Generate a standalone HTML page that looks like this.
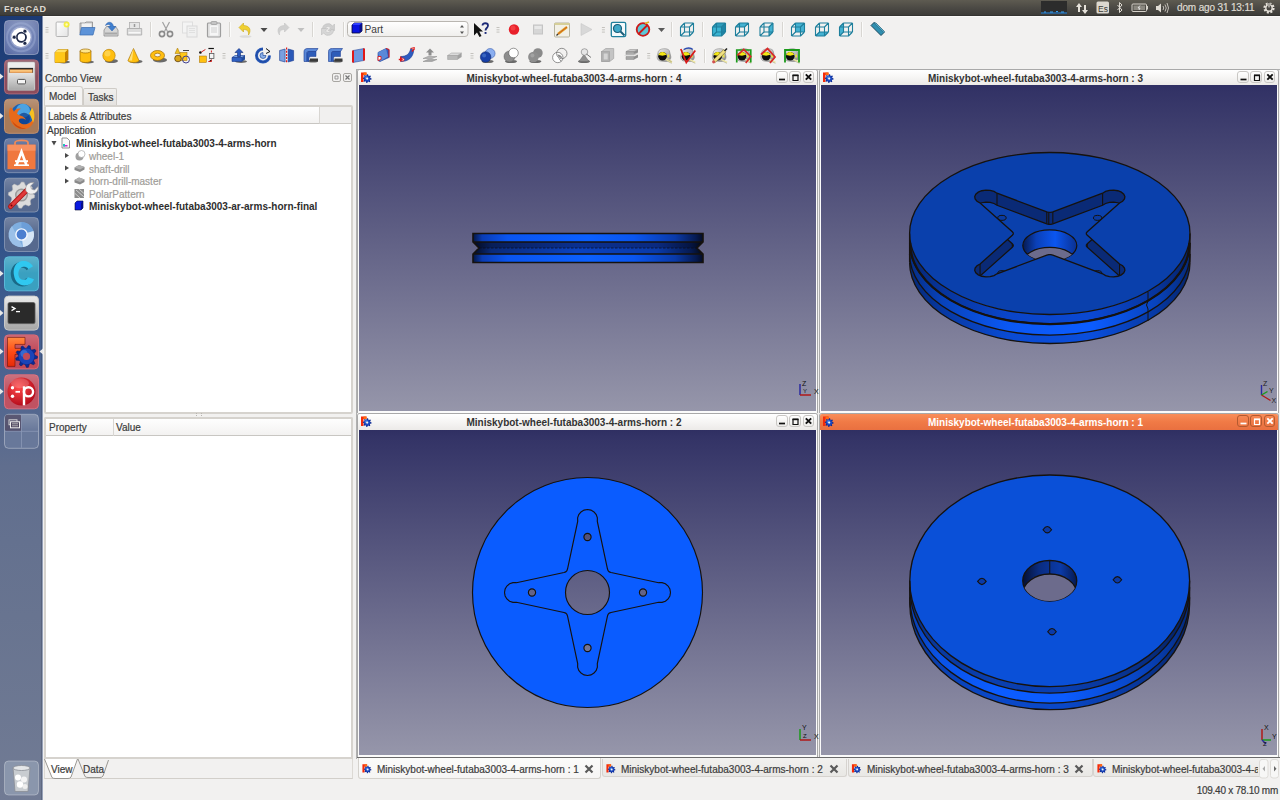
<!DOCTYPE html><html><head><meta charset="utf-8"><style>
*{margin:0;padding:0;box-sizing:border-box}
html,body{width:1280px;height:800px;overflow:hidden;background:#f2f1f0;font-family:"Liberation Sans",sans-serif;font-size:10px;color:#3c3c3c}
div,span{position:absolute}
svg{position:absolute;left:0;top:0}
.t{white-space:nowrap;line-height:1;-webkit-text-stroke:0.2px currentColor}
.t[style*="bold"]{-webkit-text-stroke:0}
</style></head><body>
<div style="left:0;top:0;width:1280px;height:16px;background:linear-gradient(#5e5b51,#4b4944 50%,#3e3d39 93%,#2e2d2a)"></div>
<div class="t" style="left:4px;top:5px;font-weight:bold;font-size:9px;letter-spacing:0.6px;color:#dfdbd2">FreeCAD</div>
<div class="t" style="left:1177px;top:3px;font-size:10px;color:#dfdbd2;letter-spacing:-0.15px">dom ago 31 13:11</div>
<div style="left:0;top:16px;width:43px;height:784px;background:linear-gradient(#1c3a74 0px,#24467e 100px,#33548a 230px,#4a6290 350px,#606e8e 450px,#687490 600px,#717b94 784px)"></div>
<div style="left:41px;top:16px;width:1px;height:784px;background:rgba(20,30,50,0.2)"></div>
<div style="left:42px;top:16px;width:1px;height:784px;background:rgba(170,180,200,0.7)"></div>
<div style="left:43px;top:16px;width:1237px;height:1px;background:#fbfaf9"></div>
<div class="t" style="left:45px;top:74px;font-size:10px;color:#3c3c3c">Combo View</div>
<div style="left:332px;top:73px;width:9px;height:9px;border:1px solid #a8a6a2;border-radius:2px;background:#f2f1f0"></div>
<div style="left:343px;top:73px;width:9px;height:9px;border:1px solid #a8a6a2;border-radius:2px;background:#f2f1f0"></div>
<div style="left:83px;top:88px;width:34px;height:18px;border:1px solid #cfccc7;border-bottom:none;border-radius:2px 2px 0 0;background:linear-gradient(#f1f0ee,#e4e2df)"></div>
<div style="left:44px;top:86px;width:39px;height:20px;border:1px solid #d3d0cb;border-bottom:none;border-radius:3px 3px 0 0;background:#f4f3f2"></div>
<div class="t" style="left:49px;top:92px;color:#3c3c3c">Model</div>
<div class="t" style="left:88px;top:93px;color:#3c3c3c">Tasks</div>
<div style="left:44px;top:105px;width:309px;height:309px;border:2px solid #d6d3ce;border-radius:2px;background:#fff"></div>
<div style="left:46px;top:107px;width:305px;height:17px;background:#f1f0ef;border-bottom:1px solid #cfcdc9"></div>
<div style="left:46px;top:107px;width:274px;height:17px;background:linear-gradient(#fefefe,#f3f2f1);border-right:1px solid #d8d6d2;border-bottom:1px solid #c8c6c2"></div>
<div class="t" style="left:48px;top:112px;color:#3c3c3c">Labels &amp; Attributes</div>
<div class="t" style="left:47px;top:126px;font-weight:normal;color:#3c3c3c">Application</div>
<div class="t" style="left:76px;top:139px;font-weight:bold;color:#2e2e2e">Miniskybot-wheel-futaba3003-4-arms-horn</div>
<div class="t" style="left:89px;top:151.5px;font-weight:normal;color:#a09d99">wheel-1</div>
<div class="t" style="left:89px;top:164.5px;font-weight:normal;color:#a09d99">shaft-drill</div>
<div class="t" style="left:89px;top:177px;font-weight:normal;color:#a09d99">horn-drill-master</div>
<div class="t" style="left:89px;top:189.5px;font-weight:normal;color:#a09d99">PolarPattern</div>
<div class="t" style="left:89px;top:202px;font-weight:bold;color:#2e2e2e">Miniskybot-wheel-futaba3003-ar-arms-horn-final</div>
<div style="left:196px;top:413px;width:6px;height:3px;border-left:1px dotted #b8b5b0;border-right:1px dotted #b8b5b0"></div>
<div style="left:44px;top:417px;width:309px;height:345px;border:2px solid #d6d3ce;border-bottom:none;border-radius:2px 2px 0 0;background:#fff"></div>
<div style="left:46px;top:419px;width:305px;height:17px;background:linear-gradient(#fefefe,#f3f2f1);border-bottom:1px solid #c8c6c2"></div>
<div style="left:113px;top:419px;width:1px;height:17px;background:#d8d6d2"></div>
<div class="t" style="left:49px;top:423px;color:#3c3c3c">Property</div>
<div class="t" style="left:116px;top:423px;color:#3c3c3c">Value</div>
<div style="left:44px;top:757px;width:309px;height:2px;background:#d6d3ce"></div>
<div style="left:44px;top:759px;width:309px;height:20px;border-left:1px solid #dcd9d4;border-right:1px solid #dcd9d4;border-bottom:1px solid #d2cfca;background:#f2f1f0"></div>
<svg width="120" height="24" style="left:40px;top:757px"><path d="M4.5,2 L12,20.5 Q13,21.5 15,21.5 H28 Q30,21.5 31,20 L37.5,2" fill="#fff" stroke="#8e8c88" stroke-width="0.9"/><path d="M38,2 L45,19.5 Q46,20.5 48,20.5 H60 Q62,20.5 63,19 L68.5,3" fill="#f1f0ef" stroke="#8e8c88" stroke-width="0.9"/></svg>
<div class="t" style="left:51px;top:765px;color:#3c3c3c">View</div>
<div class="t" style="left:83px;top:765px;color:#3c3c3c">Data</div>
<div style="left:356px;top:69px;width:924px;height:690px;background:#f2f1f0;border-left:1px solid #b0b0b0;border-top:1px solid #b0b0b0"></div>
<div style="left:357px;top:69px;width:461px;height:344px;background:#fbfbfb;border:1px solid #a9a9a9;border-bottom:none;border-radius:3px 3px 0 0"></div>
<div style="left:358px;top:70px;width:459px;height:15px;background:linear-gradient(#ffffff,#f7f6f5 45%,#eceae8);border-radius:2px 2px 0 0"></div>
<div style="left:359px;top:85px;width:457px;height:326px;background:linear-gradient(#2f2f62,#333366 2%,#9696aa)"></div>
<div class="t" style="left:373px;width:402px;top:74px;text-align:center;font-weight:bold;color:#333333">Miniskybot-wheel-futaba3003-4-arms-horn : 4</div>
<div style="left:776.0px;top:71px;width:11.5px;height:12px;border:1px solid #c9c7c4;border-radius:3px;background:linear-gradient(#ffffff,#eeedeb)"></div>
<div style="left:789.3px;top:71px;width:11.5px;height:12px;border:1px solid #c9c7c4;border-radius:3px;background:linear-gradient(#ffffff,#eeedeb)"></div>
<div style="left:802.6px;top:71px;width:11.5px;height:12px;border:1px solid #c9c7c4;border-radius:3px;background:linear-gradient(#ffffff,#eeedeb)"></div>
<div style="left:819px;top:69px;width:460px;height:344px;background:#fbfbfb;border:1px solid #a9a9a9;border-bottom:none;border-radius:3px 3px 0 0"></div>
<div style="left:820px;top:70px;width:458px;height:15px;background:linear-gradient(#ffffff,#f7f6f5 45%,#eceae8);border-radius:2px 2px 0 0"></div>
<div style="left:821px;top:85px;width:456px;height:326px;background:linear-gradient(#2f2f62,#333366 2%,#9696aa)"></div>
<div class="t" style="left:835px;width:401px;top:74px;text-align:center;font-weight:bold;color:#333333">Miniskybot-wheel-futaba3003-4-arms-horn : 3</div>
<div style="left:1237.0px;top:71px;width:11.5px;height:12px;border:1px solid #c9c7c4;border-radius:3px;background:linear-gradient(#ffffff,#eeedeb)"></div>
<div style="left:1250.3px;top:71px;width:11.5px;height:12px;border:1px solid #c9c7c4;border-radius:3px;background:linear-gradient(#ffffff,#eeedeb)"></div>
<div style="left:1263.6px;top:71px;width:11.5px;height:12px;border:1px solid #c9c7c4;border-radius:3px;background:linear-gradient(#ffffff,#eeedeb)"></div>
<div style="left:357px;top:413px;width:461px;height:344px;background:#fbfbfb;border:1px solid #a9a9a9;border-bottom:none;border-radius:3px 3px 0 0"></div>
<div style="left:358px;top:414px;width:459px;height:16px;background:linear-gradient(#ffffff,#f7f6f5 45%,#eceae8);border-radius:2px 2px 0 0"></div>
<div style="left:359px;top:430px;width:457px;height:325px;background:linear-gradient(#2f2f62,#333366 2%,#9696aa)"></div>
<div class="t" style="left:373px;width:402px;top:418px;text-align:center;font-weight:bold;color:#333333">Miniskybot-wheel-futaba3003-4-arms-horn : 2</div>
<div style="left:776.0px;top:415px;width:11.5px;height:12px;border:1px solid #c9c7c4;border-radius:3px;background:linear-gradient(#ffffff,#eeedeb)"></div>
<div style="left:789.3px;top:415px;width:11.5px;height:12px;border:1px solid #c9c7c4;border-radius:3px;background:linear-gradient(#ffffff,#eeedeb)"></div>
<div style="left:802.6px;top:415px;width:11.5px;height:12px;border:1px solid #c9c7c4;border-radius:3px;background:linear-gradient(#ffffff,#eeedeb)"></div>
<div style="left:819px;top:413px;width:460px;height:344px;background:#fbfbfb;border:1px solid #a9a9a9;border-bottom:none;border-radius:3px 3px 0 0"></div>
<div style="left:820px;top:414px;width:458px;height:16px;background:linear-gradient(#f98e5a,#f07a46 50%,#e97040);border-radius:2px 2px 0 0"></div>
<div style="left:821px;top:430px;width:456px;height:325px;background:linear-gradient(#2f2f62,#333366 2%,#9696aa)"></div>
<div class="t" style="left:835px;width:401px;top:418px;text-align:center;font-weight:bold;color:#ffffff">Miniskybot-wheel-futaba3003-4-arms-horn : 1</div>
<div style="left:1237.0px;top:415px;width:11.5px;height:12px;border:1px solid #b45a30;border-radius:3px;background:transparent"></div>
<div style="left:1250.3px;top:415px;width:11.5px;height:12px;border:1px solid #b45a30;border-radius:3px;background:transparent"></div>
<div style="left:1263.6px;top:415px;width:11.5px;height:12px;border:1px solid #b45a30;border-radius:3px;background:transparent"></div>
<div style="left:357px;top:757px;width:923px;height:1px;background:#6b6b6b"></div>
<div style="left:357px;top:758px;width:923px;height:21px;background:#f2f1f0"></div>
<div style="left:358px;top:758px;width:243px;height:21px;background:linear-gradient(#fbfbfa,#f6f5f4);border:1px solid #d4d1cc;border-top:none;border-radius:0 0 3px 3px"></div>
<div class="t" style="left:377px;top:765px;color:#3c3c3c;overflow:hidden;width:210px">Miniskybot-wheel-futaba3003-4-arms-horn : 1</div>
<div style="left:602px;top:759px;width:245px;height:18px;background:linear-gradient(#f1f0ee,#e9e8e5);border:1px solid #d6d3cf;border-top:none;border-radius:0 0 3px 3px"></div>
<div class="t" style="left:621px;top:765px;color:#3c3c3c;overflow:hidden;width:210px">Miniskybot-wheel-futaba3003-4-arms-horn : 2</div>
<div style="left:848px;top:759px;width:245px;height:18px;background:linear-gradient(#f1f0ee,#e9e8e5);border:1px solid #d6d3cf;border-top:none;border-radius:0 0 3px 3px"></div>
<div class="t" style="left:867px;top:765px;color:#3c3c3c;overflow:hidden;width:210px">Miniskybot-wheel-futaba3003-4-arms-horn : 3</div>
<div style="left:1093px;top:759px;width:169px;height:18px;background:linear-gradient(#f1f0ee,#e9e8e5);border:1px solid #d6d3cf;border-top:none;border-radius:0 0 3px 3px"></div>
<div class="t" style="left:1112px;top:765px;color:#3c3c3c;overflow:hidden;width:146px">Miniskybot-wheel-futaba3003-4-a</div>
<div class="t" style="left:1102px;width:176px;top:786px;text-align:right;color:#3c3c3c;letter-spacing:-0.25px">109.40 x 78.10 mm</div>
<svg width="1280" height="800" viewBox="0 0 1280 800" font-family="Liberation Sans, sans-serif">
<defs>
<linearGradient id="g4a" x1="0" x2="1" y1="0" y2="0">
<stop offset="0" stop-color="#061640"/><stop offset="0.04" stop-color="#0a3cb4"/><stop offset="0.15" stop-color="#0a55f0"/><stop offset="0.5" stop-color="#0b60ff"/><stop offset="0.7" stop-color="#0a56f0"/><stop offset="0.88" stop-color="#0a3aa8"/><stop offset="0.97" stop-color="#061a50"/><stop offset="1" stop-color="#050c24"/></linearGradient>
<linearGradient id="g4b" x1="0" x2="1" y1="0" y2="0">
<stop offset="0" stop-color="#030a20"/><stop offset="0.08" stop-color="#081e58"/><stop offset="0.45" stop-color="#0a3090"/><stop offset="0.8" stop-color="#0a2a80"/><stop offset="0.95" stop-color="#051440"/><stop offset="1" stop-color="#030812"/></linearGradient>
<linearGradient id="g4c" x1="0" x2="1" y1="0" y2="0">
<stop offset="0" stop-color="#030a20"/><stop offset="0.08" stop-color="#0a2a78"/><stop offset="0.45" stop-color="#0a42c0"/><stop offset="0.8" stop-color="#0a3aa8"/><stop offset="0.95" stop-color="#061a50"/><stop offset="1" stop-color="#030812"/></linearGradient>
</defs>
<rect x="473" y="233" width="230" height="9" fill="url(#g4a)"/>
<polygon points="473,242 703,242 697,248 479,248" fill="url(#g4b)"/>
<polygon points="479,248 697,248 703,254 473,254" fill="url(#g4c)"/>
<rect x="473" y="254" width="230" height="9" fill="url(#g4a)"/>
<path d="M473,233.5 H703 V242 L697,248 L703,254 V262.5 H473 V254 L479,248 L473,242 Z M473,242 H703 M473,254 H703" fill="none" stroke="#16120e" stroke-width="1.6"/>
<path d="M479,248 H697" stroke="#0c0c18" stroke-width="1.1" stroke-dasharray="2.5,1.5" opacity="0.7"/>
<defs><linearGradient id="sideShade" x1="0" x2="1" y1="0" y2="0"><stop offset="0" stop-color="#000820" stop-opacity="0.55"/><stop offset="0.12" stop-color="#000820" stop-opacity="0.3"/><stop offset="0.35" stop-color="#000820" stop-opacity="0.05"/><stop offset="0.65" stop-color="#000820" stop-opacity="0"/><stop offset="0.88" stop-color="#000820" stop-opacity="0.3"/><stop offset="1" stop-color="#000820" stop-opacity="0.6"/></linearGradient></defs>
<path d="M1190,233.5 L1189.7,238.8 L1188.8,244.07 L1187.31,249.3 L1185.22,254.46 L1182.56,259.54 L1179.33,264.5 L1175.54,269.33 L1171.22,274 L1166.37,278.5 L1161.03,282.81 L1155.21,286.91 L1148.94,290.78 L1142.24,294.4 L1135.15,297.76 L1127.69,300.85 L1119.9,303.65 L1111.81,306.15 L1103.45,308.33 L1094.87,310.2 L1086.09,311.74 L1077.15,312.94 L1068.1,313.81 L1058.97,314.33 L1049.8,314.5 L1040.63,314.33 L1031.5,313.81 L1022.45,312.94 L1013.51,311.74 L1004.73,310.2 L996.15,308.33 L987.79,306.15 L979.7,303.65 L971.91,300.85 L964.45,297.76 L957.36,294.4 L950.66,290.78 L944.39,286.91 L938.57,282.81 L933.23,278.5 L928.38,274 L924.06,269.33 L920.27,264.5 L917.04,259.54 L914.38,254.46 L912.29,249.3 L910.8,244.07 L909.9,238.8 L909.6,233.5 L909.6,242.8 L909.9,248.1 L910.8,253.37 L912.29,258.6 L914.38,263.76 L917.04,268.84 L920.27,273.8 L924.06,278.63 L928.38,283.3 L933.23,287.8 L938.57,292.11 L944.39,296.21 L950.66,300.08 L957.36,303.7 L964.45,307.06 L971.91,310.15 L979.7,312.95 L987.79,315.45 L996.15,317.63 L1004.73,319.5 L1013.51,321.04 L1022.45,322.24 L1031.5,323.11 L1040.63,323.63 L1049.8,323.8 L1058.97,323.63 L1068.1,323.11 L1077.15,322.24 L1086.09,321.04 L1094.87,319.5 L1103.45,317.63 L1111.81,315.45 L1119.9,312.95 L1127.69,310.15 L1135.15,307.06 L1142.24,303.7 L1148.94,300.08 L1155.21,296.21 L1161.03,292.11 L1166.37,287.8 L1171.22,283.3 L1175.54,278.63 L1179.33,273.8 L1182.56,268.84 L1185.22,263.76 L1187.31,258.6 L1188.8,253.37 L1189.7,248.1 L1190,242.8Z" fill="#0a48d2"/>
<path d="M1190,242.8 L1189.7,248.1 L1188.8,253.37 L1187.31,258.6 L1185.22,263.76 L1182.56,268.84 L1179.33,273.8 L1175.54,278.63 L1171.22,283.3 L1166.37,287.8 L1161.03,292.11 L1155.21,296.21 L1148.94,300.08 L1142.24,303.7 L1135.15,307.06 L1127.69,310.15 L1119.9,312.95 L1111.81,315.45 L1103.45,317.63 L1094.87,319.5 L1086.09,321.04 L1077.15,322.24 L1068.1,323.11 L1058.97,323.63 L1049.8,323.8 L1040.63,323.63 L1031.5,323.11 L1022.45,322.24 L1013.51,321.04 L1004.73,319.5 L996.15,317.63 L987.79,315.45 L979.7,312.95 L971.91,310.15 L964.45,307.06 L957.36,303.7 L950.66,300.08 L944.39,296.21 L938.57,292.11 L933.23,287.8 L928.38,283.3 L924.06,278.63 L920.27,273.8 L917.04,268.84 L914.38,263.76 L912.29,258.6 L910.8,253.37 L909.9,248.1 L909.6,242.8 L909.6,254.1 L909.9,259.4 L910.8,264.67 L912.29,269.9 L914.38,275.06 L917.04,280.14 L920.27,285.1 L924.06,289.93 L928.38,294.6 L933.23,299.1 L938.57,303.41 L944.39,307.51 L950.66,311.38 L957.36,315 L964.45,318.36 L971.91,321.45 L979.7,324.25 L987.79,326.75 L996.15,328.93 L1004.73,330.8 L1013.51,332.34 L1022.45,333.54 L1031.5,334.41 L1040.63,334.93 L1049.8,335.1 L1058.97,334.93 L1068.1,334.41 L1077.15,333.54 L1086.09,332.34 L1094.87,330.8 L1103.45,328.93 L1111.81,326.75 L1119.9,324.25 L1127.69,321.45 L1135.15,318.36 L1142.24,315 L1148.94,311.38 L1155.21,307.51 L1161.03,303.41 L1166.37,299.1 L1171.22,294.6 L1175.54,289.93 L1179.33,285.1 L1182.56,280.14 L1185.22,275.06 L1187.31,269.9 L1188.8,264.67 L1189.7,259.4 L1190,254.1Z" fill="#0b5cff"/>
<path d="M1190,254.1 L1189.7,259.4 L1188.8,264.67 L1187.31,269.9 L1185.22,275.06 L1182.56,280.14 L1179.33,285.1 L1175.54,289.93 L1171.22,294.6 L1166.37,299.1 L1161.03,303.41 L1155.21,307.51 L1148.94,311.38 L1142.24,315 L1135.15,318.36 L1127.69,321.45 L1119.9,324.25 L1111.81,326.75 L1103.45,328.93 L1094.87,330.8 L1086.09,332.34 L1077.15,333.54 L1068.1,334.41 L1058.97,334.93 L1049.8,335.1 L1040.63,334.93 L1031.5,334.41 L1022.45,333.54 L1013.51,332.34 L1004.73,330.8 L996.15,328.93 L987.79,326.75 L979.7,324.25 L971.91,321.45 L964.45,318.36 L957.36,315 L950.66,311.38 L944.39,307.51 L938.57,303.41 L933.23,299.1 L928.38,294.6 L924.06,289.93 L920.27,285.1 L917.04,280.14 L914.38,275.06 L912.29,269.9 L910.8,264.67 L909.9,259.4 L909.6,254.1 L909.6,262.5 L909.9,267.8 L910.8,273.07 L912.29,278.3 L914.38,283.46 L917.04,288.54 L920.27,293.5 L924.06,298.33 L928.38,303 L933.23,307.5 L938.57,311.81 L944.39,315.91 L950.66,319.78 L957.36,323.4 L964.45,326.76 L971.91,329.85 L979.7,332.65 L987.79,335.15 L996.15,337.33 L1004.73,339.2 L1013.51,340.74 L1022.45,341.94 L1031.5,342.81 L1040.63,343.33 L1049.8,343.5 L1058.97,343.33 L1068.1,342.81 L1077.15,341.94 L1086.09,340.74 L1094.87,339.2 L1103.45,337.33 L1111.81,335.15 L1119.9,332.65 L1127.69,329.85 L1135.15,326.76 L1142.24,323.4 L1148.94,319.78 L1155.21,315.91 L1161.03,311.81 L1166.37,307.5 L1171.22,303 L1175.54,298.33 L1179.33,293.5 L1182.56,288.54 L1185.22,283.46 L1187.31,278.3 L1188.8,273.07 L1189.7,267.8 L1190,262.5Z" fill="#0a4edc"/>
<path d="M1190,233.5 L1189.7,238.8 L1188.8,244.07 L1187.31,249.3 L1185.22,254.46 L1182.56,259.54 L1179.33,264.5 L1175.54,269.33 L1171.22,274 L1166.37,278.5 L1161.03,282.81 L1155.21,286.91 L1148.94,290.78 L1142.24,294.4 L1135.15,297.76 L1127.69,300.85 L1119.9,303.65 L1111.81,306.15 L1103.45,308.33 L1094.87,310.2 L1086.09,311.74 L1077.15,312.94 L1068.1,313.81 L1058.97,314.33 L1049.8,314.5 L1040.63,314.33 L1031.5,313.81 L1022.45,312.94 L1013.51,311.74 L1004.73,310.2 L996.15,308.33 L987.79,306.15 L979.7,303.65 L971.91,300.85 L964.45,297.76 L957.36,294.4 L950.66,290.78 L944.39,286.91 L938.57,282.81 L933.23,278.5 L928.38,274 L924.06,269.33 L920.27,264.5 L917.04,259.54 L914.38,254.46 L912.29,249.3 L910.8,244.07 L909.9,238.8 L909.6,233.5 L909.6,262.5 L909.9,267.8 L910.8,273.07 L912.29,278.3 L914.38,283.46 L917.04,288.54 L920.27,293.5 L924.06,298.33 L928.38,303 L933.23,307.5 L938.57,311.81 L944.39,315.91 L950.66,319.78 L957.36,323.4 L964.45,326.76 L971.91,329.85 L979.7,332.65 L987.79,335.15 L996.15,337.33 L1004.73,339.2 L1013.51,340.74 L1022.45,341.94 L1031.5,342.81 L1040.63,343.33 L1049.8,343.5 L1058.97,343.33 L1068.1,342.81 L1077.15,341.94 L1086.09,340.74 L1094.87,339.2 L1103.45,337.33 L1111.81,335.15 L1119.9,332.65 L1127.69,329.85 L1135.15,326.76 L1142.24,323.4 L1148.94,319.78 L1155.21,315.91 L1161.03,311.81 L1166.37,307.5 L1171.22,303 L1175.54,298.33 L1179.33,293.5 L1182.56,288.54 L1185.22,283.46 L1187.31,278.3 L1188.8,273.07 L1189.7,267.8 L1190,262.5Z" fill="url(#sideShade)"/>
<ellipse cx="1049.8" cy="233.5" rx="140.2" ry="81" fill="#0a40ac"/>
<path d="M909.6,242.8 A140.2,81 0 0 0 1190,242.8" fill="none" stroke="#16120e" stroke-width="1.3"/>
<path d="M909.6,254.1 A140.2,81 0 0 0 1190,254.1" fill="none" stroke="#16120e" stroke-width="1.3"/>
<path d="M909.6,262.5 A140.2,81 0 0 0 1190,262.5" fill="none" stroke="#16120e" stroke-width="1.3"/>
<ellipse cx="1049.8" cy="233.5" rx="140.2" ry="81" fill="none" stroke="#16120e" stroke-width="1.3"/>
<path d="M909.6,233.5 V262.5 M1190,233.5 V262.5" stroke="#16120e" stroke-width="1.3"/>
<path d="M910.1,243.1 A139.7,81 0 0 0 1189.5,243.1" fill="none" stroke="#16120e" stroke-width="2.2"/>
<path d="M1148,292 V301 L1146.5,305 L1148,309 V321" stroke="#16120e" stroke-width="1" fill="none"/>
<defs><clipPath id="c3"><path d="M1087.3,235.24 L1119.53,264.01 L1122.61,265.73 L1124.47,267.96 L1124.88,270.42 L1123.8,272.81 L1121.35,274.84 L1117.84,276.25 L1113.7,276.88 L1109.44,276.64 L1105.59,275.56 L1102.61,273.79 L1052.82,255.17 L1050.83,254.62 L1048.77,254.62 L1046.78,255.17 L996.99,273.79 L994.01,275.56 L990.16,276.64 L985.9,276.88 L981.76,276.25 L978.25,274.84 L975.8,272.81 L974.72,270.42 L975.13,267.96 L976.99,265.73 L980.07,264.01 L1012.3,235.24 L1013.25,234.1 L1013.25,232.9 L1012.3,231.76 L980.07,202.99 L976.99,201.27 L975.13,199.04 L974.72,196.58 L975.8,194.19 L978.25,192.16 L981.76,190.75 L985.9,190.12 L990.16,190.36 L994.01,191.44 L996.99,193.21 L1046.78,211.83 L1048.77,212.38 L1050.83,212.38 L1052.82,211.83 L1102.61,193.21 L1105.59,191.44 L1109.44,190.36 L1113.7,190.12 L1117.84,190.75 L1121.35,192.16 L1123.8,194.19 L1124.88,196.58 L1124.47,199.04 L1122.61,201.27 L1119.53,202.99 L1087.3,231.76 L1086.35,232.9 L1086.35,234.1Z"/></clipPath><clipPath id="c3h"><ellipse cx="1049.8" cy="245.5" rx="27" ry="15.6"/></clipPath><linearGradient id="g3w" x1="0" x2="1"><stop offset="0" stop-color="#061a50"/><stop offset="0.25" stop-color="#0a40b8"/><stop offset="0.6" stop-color="#0b56f0"/><stop offset="1" stop-color="#0a3090"/></linearGradient></defs>
<g clip-path="url(#c3)"><path d="M1087.3,235.24 L1119.53,264.01 L1122.61,265.73 L1124.47,267.96 L1124.88,270.42 L1123.8,272.81 L1121.35,274.84 L1117.84,276.25 L1113.7,276.88 L1109.44,276.64 L1105.59,275.56 L1102.61,273.79 L1052.82,255.17 L1050.83,254.62 L1048.77,254.62 L1046.78,255.17 L996.99,273.79 L994.01,275.56 L990.16,276.64 L985.9,276.88 L981.76,276.25 L978.25,274.84 L975.8,272.81 L974.72,270.42 L975.13,267.96 L976.99,265.73 L980.07,264.01 L1012.3,235.24 L1013.25,234.1 L1013.25,232.9 L1012.3,231.76 L980.07,202.99 L976.99,201.27 L975.13,199.04 L974.72,196.58 L975.8,194.19 L978.25,192.16 L981.76,190.75 L985.9,190.12 L990.16,190.36 L994.01,191.44 L996.99,193.21 L1046.78,211.83 L1048.77,212.38 L1050.83,212.38 L1052.82,211.83 L1102.61,193.21 L1105.59,191.44 L1109.44,190.36 L1113.7,190.12 L1117.84,190.75 L1121.35,192.16 L1123.8,194.19 L1124.88,196.58 L1124.47,199.04 L1122.61,201.27 L1119.53,202.99 L1087.3,231.76 L1086.35,232.9 L1086.35,234.1Z" fill="#0a2a76"/>
<path d="M1087.3,235.24 V247.24 M1119.53,264.01 V276.01 M1102.61,273.79 V285.79 M1052.82,255.17 V267.17 M1050.83,254.62 V266.62 M1046.78,255.17 V267.17 M996.99,273.79 V285.79 M980.07,264.01 V276.01 M1012.3,235.24 V247.24 M1013.25,234.1 V246.1 M1012.3,231.76 V243.76 M980.07,202.99 V214.99 M996.99,193.21 V205.21 M1046.78,211.83 V223.83 M1048.77,212.38 V224.38 M1052.82,211.83 V223.83 M1102.61,193.21 V205.21 M1119.53,202.99 V214.99 M1087.3,231.76 V243.76 M1086.35,232.9 V244.9 " stroke="#16120e" stroke-width="1.1"/>
<path d="M1087.3,247.24 L1119.53,276.01 L1122.61,277.73 L1124.47,279.96 L1124.88,282.42 L1123.8,284.81 L1121.35,286.84 L1117.84,288.25 L1113.7,288.88 L1109.44,288.64 L1105.59,287.56 L1102.61,285.79 L1052.82,267.17 L1050.83,266.62 L1048.77,266.62 L1046.78,267.17 L996.99,285.79 L994.01,287.56 L990.16,288.64 L985.9,288.88 L981.76,288.25 L978.25,286.84 L975.8,284.81 L974.72,282.42 L975.13,279.96 L976.99,277.73 L980.07,276.01 L1012.3,247.24 L1013.25,246.1 L1013.25,244.9 L1012.3,243.76 L980.07,214.99 L976.99,213.27 L975.13,211.04 L974.72,208.58 L975.8,206.19 L978.25,204.16 L981.76,202.75 L985.9,202.12 L990.16,202.36 L994.01,203.44 L996.99,205.21 L1046.78,223.83 L1048.77,224.38 L1050.83,224.38 L1052.82,223.83 L1102.61,205.21 L1105.59,203.44 L1109.44,202.36 L1113.7,202.12 L1117.84,202.75 L1121.35,204.16 L1123.8,206.19 L1124.88,208.58 L1124.47,211.04 L1122.61,213.27 L1119.53,214.99 L1087.3,243.76 L1086.35,244.9 L1086.35,246.1Z" fill="#0a40ac" stroke="#16120e" stroke-width="1.2"/>
<ellipse cx="1049.8" cy="245.5" rx="27" ry="15.6" fill="url(#g3w)" stroke="#16120e" stroke-width="1.2"/>
<g clip-path="url(#c3h)"><ellipse cx="1049.8" cy="263" rx="27" ry="15.6" fill="#6c6b8c" stroke="#16120e" stroke-width="1.2"/></g>
<ellipse cx="1097.64" cy="217.86" rx="4.2" ry="2.5" fill="#0a3aa0" stroke="#16120e" stroke-width="1"/>
<ellipse cx="1001.96" cy="217.86" rx="4.2" ry="2.5" fill="#0a3aa0" stroke="#16120e" stroke-width="1"/>
<ellipse cx="1097.64" cy="273.14" rx="4.2" ry="2.5" fill="#0a3aa0" stroke="#16120e" stroke-width="1"/>
<ellipse cx="1001.96" cy="273.14" rx="4.2" ry="2.5" fill="#0a3aa0" stroke="#16120e" stroke-width="1"/>
</g>
<path d="M1087.3,235.24 L1119.53,264.01 L1122.61,265.73 L1124.47,267.96 L1124.88,270.42 L1123.8,272.81 L1121.35,274.84 L1117.84,276.25 L1113.7,276.88 L1109.44,276.64 L1105.59,275.56 L1102.61,273.79 L1052.82,255.17 L1050.83,254.62 L1048.77,254.62 L1046.78,255.17 L996.99,273.79 L994.01,275.56 L990.16,276.64 L985.9,276.88 L981.76,276.25 L978.25,274.84 L975.8,272.81 L974.72,270.42 L975.13,267.96 L976.99,265.73 L980.07,264.01 L1012.3,235.24 L1013.25,234.1 L1013.25,232.9 L1012.3,231.76 L980.07,202.99 L976.99,201.27 L975.13,199.04 L974.72,196.58 L975.8,194.19 L978.25,192.16 L981.76,190.75 L985.9,190.12 L990.16,190.36 L994.01,191.44 L996.99,193.21 L1046.78,211.83 L1048.77,212.38 L1050.83,212.38 L1052.82,211.83 L1102.61,193.21 L1105.59,191.44 L1109.44,190.36 L1113.7,190.12 L1117.84,190.75 L1121.35,192.16 L1123.8,194.19 L1124.88,196.58 L1124.47,199.04 L1122.61,201.27 L1119.53,202.99 L1087.3,231.76 L1086.35,232.9 L1086.35,234.1Z" fill="none" stroke="#16120e" stroke-width="1.3"/>
<path d="M702.5,592.5 A115,115 0 1 0 472.5,592.5 A115,115 0 1 0 702.5,592.5 Z M609.5,592.5 A22,22 0 1 0 565.5,592.5 A22,22 0 1 0 609.5,592.5 Z M591.1,537 A3.6,3.6 0 1 0 583.9,537 A3.6,3.6 0 1 0 591.1,537 Z M591.1,648 A3.6,3.6 0 1 0 583.9,648 A3.6,3.6 0 1 0 591.1,648 Z M535.6,592.5 A3.6,3.6 0 1 0 528.4,592.5 A3.6,3.6 0 1 0 535.6,592.5 Z M646.6,592.5 A3.6,3.6 0 1 0 639.4,592.5 A3.6,3.6 0 1 0 646.6,592.5 Z " fill="#0a5cff" fill-rule="evenodd" stroke="#16120e" stroke-width="1.15"/>
<path d="M611,572.5 L658.58,582.69 L662.09,582.63 L665.4,583.78 L668.11,586.01 L669.88,589.04 L670.5,592.5 L669.88,595.96 L668.11,598.99 L665.4,601.22 L662.09,602.37 L658.58,602.31 L611,612.5 L609.3,613.1 L608.1,614.3 L607.5,616 L597.31,663.58 L597.37,667.09 L596.22,670.4 L593.99,673.11 L590.96,674.88 L587.5,675.5 L584.04,674.88 L581.01,673.11 L578.78,670.4 L577.63,667.09 L577.69,663.58 L567.5,616 L566.9,614.3 L565.7,613.1 L564,612.5 L516.42,602.31 L512.91,602.37 L509.6,601.22 L506.89,598.99 L505.12,595.96 L504.5,592.5 L505.12,589.04 L506.89,586.01 L509.6,583.78 L512.91,582.63 L516.42,582.69 L564,572.5 L565.7,571.9 L566.9,570.7 L567.5,569 L577.69,521.42 L577.63,517.91 L578.78,514.6 L581.01,511.89 L584.04,510.12 L587.5,509.5 L590.96,510.12 L593.99,511.89 L596.22,514.6 L597.37,517.91 L597.31,521.42 L607.5,569 L608.1,570.7 L609.3,571.9Z" fill="none" stroke="#16120e" stroke-width="1.15"/>
<defs><linearGradient id="sideShade1" x1="0" x2="1" y1="0" y2="0"><stop offset="0" stop-color="#000820" stop-opacity="0.35"/><stop offset="0.1" stop-color="#000820" stop-opacity="0.12"/><stop offset="0.3" stop-color="#000820" stop-opacity="0"/><stop offset="0.55" stop-color="#000820" stop-opacity="0"/><stop offset="0.8" stop-color="#000820" stop-opacity="0.25"/><stop offset="0.93" stop-color="#000820" stop-opacity="0.45"/><stop offset="1" stop-color="#000820" stop-opacity="0.6"/></linearGradient></defs>
<path d="M1189.6,580.8 L1189.3,587.72 L1188.4,594.61 L1186.91,601.44 L1184.83,608.18 L1182.18,614.81 L1178.95,621.29 L1175.17,627.59 L1170.86,633.7 L1166.02,639.58 L1160.69,645.21 L1154.88,650.56 L1148.62,655.61 L1141.94,660.34 L1134.87,664.74 L1127.42,668.77 L1119.65,672.43 L1111.58,675.69 L1103.24,678.55 L1094.67,680.99 L1085.91,682.99 L1076.99,684.57 L1067.96,685.69 L1058.85,686.37 L1049.7,686.6 L1040.55,686.37 L1031.44,685.69 L1022.41,684.57 L1013.49,682.99 L1004.73,680.99 L996.16,678.55 L987.82,675.69 L979.75,672.43 L971.98,668.77 L964.53,664.74 L957.46,660.34 L950.78,655.61 L944.52,650.56 L938.71,645.21 L933.38,639.58 L928.54,633.7 L924.23,627.59 L920.45,621.29 L917.22,614.81 L914.57,608.18 L912.49,601.44 L911,594.61 L910.1,587.72 L909.8,580.8 L909.8,587.3 L910.1,594.22 L911,601.11 L912.49,607.94 L914.57,614.68 L917.22,621.31 L920.45,627.79 L924.23,634.09 L928.54,640.2 L933.38,646.08 L938.71,651.71 L944.52,657.06 L950.78,662.11 L957.46,666.84 L964.53,671.24 L971.98,675.27 L979.75,678.93 L987.82,682.19 L996.16,685.05 L1004.73,687.49 L1013.49,689.49 L1022.41,691.07 L1031.44,692.19 L1040.55,692.87 L1049.7,693.1 L1058.85,692.87 L1067.96,692.19 L1076.99,691.07 L1085.91,689.49 L1094.67,687.49 L1103.24,685.05 L1111.58,682.19 L1119.65,678.93 L1127.42,675.27 L1134.87,671.24 L1141.94,666.84 L1148.62,662.11 L1154.88,657.06 L1160.69,651.71 L1166.02,646.08 L1170.86,640.2 L1175.17,634.09 L1178.95,627.79 L1182.18,621.31 L1184.83,614.68 L1186.91,607.94 L1188.4,601.11 L1189.3,594.22 L1189.6,587.3Z" fill="#0a3fb0"/>
<path d="M1189.6,587.3 L1189.3,594.22 L1188.4,601.11 L1186.91,607.94 L1184.83,614.68 L1182.18,621.31 L1178.95,627.79 L1175.17,634.09 L1170.86,640.2 L1166.02,646.08 L1160.69,651.71 L1154.88,657.06 L1148.62,662.11 L1141.94,666.84 L1134.87,671.24 L1127.42,675.27 L1119.65,678.93 L1111.58,682.19 L1103.24,685.05 L1094.67,687.49 L1085.91,689.49 L1076.99,691.07 L1067.96,692.19 L1058.85,692.87 L1049.7,693.1 L1040.55,692.87 L1031.44,692.19 L1022.41,691.07 L1013.49,689.49 L1004.73,687.49 L996.16,685.05 L987.82,682.19 L979.75,678.93 L971.98,675.27 L964.53,671.24 L957.46,666.84 L950.78,662.11 L944.52,657.06 L938.71,651.71 L933.38,646.08 L928.54,640.2 L924.23,634.09 L920.45,627.79 L917.22,621.31 L914.57,614.68 L912.49,607.94 L911,601.11 L910.1,594.22 L909.8,587.3 L909.8,597.3 L910.1,604.22 L911,611.11 L912.49,617.94 L914.57,624.68 L917.22,631.31 L920.45,637.79 L924.23,644.09 L928.54,650.2 L933.38,656.08 L938.71,661.71 L944.52,667.06 L950.78,672.11 L957.46,676.84 L964.53,681.24 L971.98,685.27 L979.75,688.93 L987.82,692.19 L996.16,695.05 L1004.73,697.49 L1013.49,699.49 L1022.41,701.07 L1031.44,702.19 L1040.55,702.87 L1049.7,703.1 L1058.85,702.87 L1067.96,702.19 L1076.99,701.07 L1085.91,699.49 L1094.67,697.49 L1103.24,695.05 L1111.58,692.19 L1119.65,688.93 L1127.42,685.27 L1134.87,681.24 L1141.94,676.84 L1148.62,672.11 L1154.88,667.06 L1160.69,661.71 L1166.02,656.08 L1170.86,650.2 L1175.17,644.09 L1178.95,637.79 L1182.18,631.31 L1184.83,624.68 L1186.91,617.94 L1188.4,611.11 L1189.3,604.22 L1189.6,597.3Z" fill="#0b5cff"/>
<path d="M1189.6,597.3 L1189.3,604.22 L1188.4,611.11 L1186.91,617.94 L1184.83,624.68 L1182.18,631.31 L1178.95,637.79 L1175.17,644.09 L1170.86,650.2 L1166.02,656.08 L1160.69,661.71 L1154.88,667.06 L1148.62,672.11 L1141.94,676.84 L1134.87,681.24 L1127.42,685.27 L1119.65,688.93 L1111.58,692.19 L1103.24,695.05 L1094.67,697.49 L1085.91,699.49 L1076.99,701.07 L1067.96,702.19 L1058.85,702.87 L1049.7,703.1 L1040.55,702.87 L1031.44,702.19 L1022.41,701.07 L1013.49,699.49 L1004.73,697.49 L996.16,695.05 L987.82,692.19 L979.75,688.93 L971.98,685.27 L964.53,681.24 L957.46,676.84 L950.78,672.11 L944.52,667.06 L938.71,661.71 L933.38,656.08 L928.54,650.2 L924.23,644.09 L920.45,637.79 L917.22,631.31 L914.57,624.68 L912.49,617.94 L911,611.11 L910.1,604.22 L909.8,597.3 L909.8,603.9 L910.1,610.82 L911,617.71 L912.49,624.54 L914.57,631.28 L917.22,637.91 L920.45,644.39 L924.23,650.69 L928.54,656.8 L933.38,662.68 L938.71,668.31 L944.52,673.66 L950.78,678.71 L957.46,683.44 L964.53,687.84 L971.98,691.87 L979.75,695.53 L987.82,698.79 L996.16,701.65 L1004.73,704.09 L1013.49,706.09 L1022.41,707.67 L1031.44,708.79 L1040.55,709.47 L1049.7,709.7 L1058.85,709.47 L1067.96,708.79 L1076.99,707.67 L1085.91,706.09 L1094.67,704.09 L1103.24,701.65 L1111.58,698.79 L1119.65,695.53 L1127.42,691.87 L1134.87,687.84 L1141.94,683.44 L1148.62,678.71 L1154.88,673.66 L1160.69,668.31 L1166.02,662.68 L1170.86,656.8 L1175.17,650.69 L1178.95,644.39 L1182.18,637.91 L1184.83,631.28 L1186.91,624.54 L1188.4,617.71 L1189.3,610.82 L1189.6,603.9Z" fill="#0a48c8"/>
<path d="M1189.6,580.8 L1189.3,587.72 L1188.4,594.61 L1186.91,601.44 L1184.83,608.18 L1182.18,614.81 L1178.95,621.29 L1175.17,627.59 L1170.86,633.7 L1166.02,639.58 L1160.69,645.21 L1154.88,650.56 L1148.62,655.61 L1141.94,660.34 L1134.87,664.74 L1127.42,668.77 L1119.65,672.43 L1111.58,675.69 L1103.24,678.55 L1094.67,680.99 L1085.91,682.99 L1076.99,684.57 L1067.96,685.69 L1058.85,686.37 L1049.7,686.6 L1040.55,686.37 L1031.44,685.69 L1022.41,684.57 L1013.49,682.99 L1004.73,680.99 L996.16,678.55 L987.82,675.69 L979.75,672.43 L971.98,668.77 L964.53,664.74 L957.46,660.34 L950.78,655.61 L944.52,650.56 L938.71,645.21 L933.38,639.58 L928.54,633.7 L924.23,627.59 L920.45,621.29 L917.22,614.81 L914.57,608.18 L912.49,601.44 L911,594.61 L910.1,587.72 L909.8,580.8 L909.8,603.9 L910.1,610.82 L911,617.71 L912.49,624.54 L914.57,631.28 L917.22,637.91 L920.45,644.39 L924.23,650.69 L928.54,656.8 L933.38,662.68 L938.71,668.31 L944.52,673.66 L950.78,678.71 L957.46,683.44 L964.53,687.84 L971.98,691.87 L979.75,695.53 L987.82,698.79 L996.16,701.65 L1004.73,704.09 L1013.49,706.09 L1022.41,707.67 L1031.44,708.79 L1040.55,709.47 L1049.7,709.7 L1058.85,709.47 L1067.96,708.79 L1076.99,707.67 L1085.91,706.09 L1094.67,704.09 L1103.24,701.65 L1111.58,698.79 L1119.65,695.53 L1127.42,691.87 L1134.87,687.84 L1141.94,683.44 L1148.62,678.71 L1154.88,673.66 L1160.69,668.31 L1166.02,662.68 L1170.86,656.8 L1175.17,650.69 L1178.95,644.39 L1182.18,637.91 L1184.83,631.28 L1186.91,624.54 L1188.4,617.71 L1189.3,610.82 L1189.6,603.9Z" fill="url(#sideShade1)"/>
<ellipse cx="1049.7" cy="580.8" rx="139.9" ry="105.8" fill="#0a50d8"/>
<path d="M909.8,587.3 A139.9,105.8 0 0 0 1189.6,587.3" fill="none" stroke="#16120e" stroke-width="1.3"/>
<path d="M909.8,597.3 A139.9,105.8 0 0 0 1189.6,597.3" fill="none" stroke="#16120e" stroke-width="1.3"/>
<path d="M909.8,603.9 A139.9,105.8 0 0 0 1189.6,603.9" fill="none" stroke="#16120e" stroke-width="1.3"/>
<ellipse cx="1049.7" cy="580.8" rx="139.9" ry="105.8" fill="none" stroke="#16120e" stroke-width="1.3"/>
<path d="M909.8,580.8 V603.9 M1189.6,580.8 V603.9" stroke="#16120e" stroke-width="1.3"/>
<defs><clipPath id="c1h"><ellipse cx="1049.75" cy="580.75" rx="27" ry="20.25"/></clipPath><linearGradient id="g1w" x1="0" x2="1"><stop offset="0" stop-color="#050f30"/><stop offset="0.3" stop-color="#0a2c80"/><stop offset="0.7" stop-color="#0a3aa8"/><stop offset="1" stop-color="#061a50"/></linearGradient></defs>
<ellipse cx="1049.75" cy="580.75" rx="27" ry="20.25" fill="url(#g1w)" stroke="#16120e" stroke-width="1.3"/>
<g clip-path="url(#c1h)"><ellipse cx="1049.75" cy="594.25" rx="27" ry="20.25" fill="#6c6b8c" stroke="#16120e" stroke-width="1.3"/></g>
<path d="M1049.75,561 V574" stroke="#16120e" stroke-width="1"/>
<path d="M1043.0,529.7 Q1045.3,526.5 1047.3,526.5 Q1049.3,526.5 1051.6,529.7 Q1049.3,532.9000000000001 1047.3,532.9000000000001 Q1045.3,532.9000000000001 1043.0,529.7 Z" fill="#0a3aa8" stroke="#16120e" stroke-width="1.1"/>
<path d="M977.6,581.4 Q979.9,578.1999999999999 981.9,578.1999999999999 Q983.9,578.1999999999999 986.1999999999999,581.4 Q983.9,584.6 981.9,584.6 Q979.9,584.6 977.6,581.4 Z" fill="#0a3aa8" stroke="#16120e" stroke-width="1.1"/>
<path d="M1113.1000000000001,579.8 Q1115.4,576.5999999999999 1117.4,576.5999999999999 Q1119.4,576.5999999999999 1121.7,579.8 Q1119.4,583.0 1117.4,583.0 Q1115.4,583.0 1113.1000000000001,579.8 Z" fill="#0a3aa8" stroke="#16120e" stroke-width="1.1"/>
<path d="M1047.7,631.7 Q1050,628.5 1052,628.5 Q1054,628.5 1056.3,631.7 Q1054,634.9000000000001 1052,634.9000000000001 Q1050,634.9000000000001 1047.7,631.7 Z" fill="#0a3aa8" stroke="#16120e" stroke-width="1.1"/>
<path d="M800,395 V384" stroke="#2a2aa0" stroke-width="1.5"/><path d="M800,395 H811" stroke="#b01818" stroke-width="1.5"/>
<text x="802" y="386" font-size="7" fill="#111">Z</text><text x="803" y="393" font-size="6" fill="#111">Y</text><text x="814" y="394" font-size="7" fill="#111">X</text>
<path d="M1261.5,395 V385" stroke="#2a2aa0" stroke-width="1.4"/><path d="M1261.5,395 L1270.5,400.5" stroke="#b01818" stroke-width="1.4"/><path d="M1261.5,395 L1267.5,391.5" stroke="#1a9a1a" stroke-width="1.4"/>
<text x="1263.0" y="385.5" font-size="7" fill="#222">Z</text><text x="1269.0" y="392.5" font-size="7" fill="#222">Y</text><text x="1271.5" y="402.5" font-size="7" fill="#222">X</text>
<path d="M800,740 V729" stroke="#1a9a1a" stroke-width="1.5"/><path d="M800,740 H811" stroke="#b01818" stroke-width="1.5"/>
<text x="802" y="730" font-size="7" fill="#111">Y</text><text x="803" y="738" font-size="6" fill="#111">Z</text><text x="814" y="739" font-size="7" fill="#111">X</text>
<path d="M1262,740 V729" stroke="#b01818" stroke-width="1.5"/><path d="M1262,740 H1271" stroke="#1a9a1a" stroke-width="1.5"/><path d="M1262,740 L1266,744" stroke="#2a2aa0" stroke-width="1.5"/>
<text x="1264" y="730" font-size="7" fill="#111">X</text><text x="1272" y="739" font-size="7" fill="#111">Y</text><text x="1263" y="746" font-size="6" fill="#111">Z</text>
<defs>
<linearGradient id="gpage" x1="0" y1="0" x2="1" y2="1"><stop offset="0" stop-color="#ffffff"/><stop offset="1" stop-color="#e4e4e4"/></linearGradient>
<linearGradient id="gtape" x1="0" y1="0" x2="1" y2="1"><stop offset="0" stop-color="#f0f0f0"/><stop offset="0.6" stop-color="#b8b8b8"/><stop offset="1" stop-color="#808080"/></linearGradient><linearGradient id="gcombo" x1="0" y1="0" x2="0" y2="1"><stop offset="0" stop-color="#ffffff"/><stop offset="1" stop-color="#efeeec"/></linearGradient>
</defs>
<g transform="translate(55.60,21.50)"><rect x="0.5" y="0.5" width="12" height="14.5" rx="1" fill="url(#gpage)" stroke="#b4b4b4"/><circle cx="11" cy="3" r="3" fill="#f5ee30" opacity="0.9"/><circle cx="11" cy="3" r="1.2" fill="#fffcc0"/></g>
<g transform="translate(79.00,21.50)"><path d="M1,1.5 H6 L7,0.5 H13.5 V12 H1 Z" fill="#cfcfcf" stroke="#8c8c8c" stroke-width="0.8"/><rect x="3" y="2" width="9.5" height="4" fill="#f2f2f2"/><path d="M2.5,6 H16 L14,13.5 H0.8 Z" fill="#5d93d8" stroke="#3a6cb0" stroke-width="0.7"/></g>
<g transform="translate(102.50,21.50)"><path d="M1.5,8.5 L4,5 H13 L15.5,8.5 V14.5 H1.5 Z" fill="#d6d6d6" stroke="#8e8e8e" stroke-width="0.8"/><rect x="2.5" y="11" width="12" height="2" fill="#a8a8a8"/><path d="M3,4 C4,0 10,-1 11,5 L13.5,5 L9.5,9.5 L5.5,5 L8,5 C7.5,2.5 5,2.5 3,4 Z" fill="#3f7fcf" stroke="#2b5fa8" stroke-width="0.5"/></g>
<g transform="translate(126.50,21.50)"><rect x="3" y="1" width="10" height="6" fill="#e6e6e6" stroke="#b0b0b0" stroke-width="0.8"/><path d="M8,2.5 V5.5" stroke="#9a9a9a" stroke-width="1.5"/><path d="M0.8,7 H15.2 V13.5 H0.8 Z" fill="#dcdcdc" stroke="#a8a8a8" stroke-width="0.8"/><rect x="2" y="10.5" width="12" height="1.5" fill="#f8f8f8"/></g>
<g transform="translate(158.00,21.50)"><path d="M4.5,0.5 L9.5,10 M11.5,0.5 L6.5,10" stroke="#a0a0a0" stroke-width="1.2"/><circle cx="4" cy="12.5" r="2.6" fill="none" stroke="#8a8a8a" stroke-width="1.6"/><circle cx="12" cy="12.5" r="2.6" fill="none" stroke="#8a8a8a" stroke-width="1.6"/></g>
<g transform="translate(182.00,21.50)"><rect x="0.5" y="0.5" width="10" height="11" fill="#f4f4f4" stroke="#dedede"/><rect x="5" y="4.5" width="10" height="11" fill="#f0f0f0" stroke="#d8d8d8"/><path d="M7,7 H13 M7,9 H13 M7,11 H13" stroke="#e0e0e0"/></g>
<g transform="translate(206.00,21.50)"><rect x="1.5" y="1.5" width="13" height="14" rx="1" fill="#e4e4e4" stroke="#9e9e9e" stroke-width="1.2"/><rect x="5" y="0" width="6" height="3" rx="1" fill="#c4c4c4" stroke="#8e8e8e" stroke-width="0.6"/><rect x="4" y="4" width="8" height="10" fill="#f6f6f6"/><path d="M5,6.5 H11 M5,8.5 H11 M5,10.5 H11" stroke="#d0d0d0"/></g>
<g transform="translate(237.00,21.50)"><ellipse cx="8.5" cy="15" rx="6" ry="1.3" fill="#dcdcdc"/><path d="M2,6 L6.5,1.5 V4 C12,4 15,8 11.5,13.5 C12,9 9.5,8 6.5,8 V10.5 Z" fill="#f0d030" stroke="#c9a818" stroke-width="0.6"/></g>
<g transform="translate(275.00,21.50)"><path d="M14,6 L9.5,1.5 V4 C4,4 1,8 4.5,13.5 C4,9 6.5,8 9.5,8 V10.5 Z" fill="#d0d0d0" stroke="#c4c4c4" stroke-width="0.6"/></g>
<g transform="translate(320.00,21.50)"><path d="M2.5,8 A5.5,5.5 0 0 1 12.5,4.5 L14.5,2.5 V9 H8 L10.5,6.5 A3,3 0 0 0 5,8 Z" fill="#cfcfcf" stroke="#bdbdbd" stroke-width="0.6"/><path d="M13.5,8 A5.5,5.5 0 0 1 3.5,11.5 L1.5,13.5 V7 H8 L5.5,9.5 A3,3 0 0 0 11,8 Z" fill="#d6d6d6" stroke="#bdbdbd" stroke-width="0.6"/></g>
<g transform="translate(473.00,21.50)"><path d="M1,1.5 V14 L4,11 L6.5,15.5 L8.5,14.5 L6.2,10 H10 Z" fill="#111"/><path d="M9.5,4 C9.5,1 15,1 15,4 C15,6.5 12.5,6.5 12.5,9" stroke="#1c2a78" stroke-width="1.8" fill="none"/><rect x="11.6" y="10.5" width="1.9" height="1.9" fill="#1c2a78"/></g>
<g transform="translate(506.00,21.50)"><circle cx="8" cy="8" r="5.2" fill="#e8202a"/><circle cx="7" cy="6.5" r="2.5" fill="#ff5a5a" opacity="0.5"/></g>
<g transform="translate(530.00,21.50)"><rect x="3.5" y="3.5" width="9" height="9" fill="#d6d6d6" stroke="#c4c4c4"/><rect x="4.5" y="4.5" width="7" height="3" fill="#e8e8e8"/></g>
<g transform="translate(554.00,21.50)"><rect x="0.5" y="1.5" width="15" height="14" rx="1" fill="#f2f0e6" stroke="#a8a48c" stroke-width="0.8"/><rect x="0.5" y="1.5" width="15" height="2" fill="#d6cf98"/><path d="M4,12.5 L13,5.5" stroke="#e0a020" stroke-width="2.4"/><path d="M4,12.5 L13,5.5" stroke="#c84a20" stroke-width="0.8"/><path d="M2.5,14 L4,12.5" stroke="#333" stroke-width="1.2"/></g>
<g transform="translate(578.00,21.50)"><path d="M3,2 L14,8 L3,14 Z" fill="#d8d8d8" stroke="#c8c8c8" stroke-width="0.6"/></g>
<g transform="translate(610.50,21.50)"><rect x="0.8" y="0.8" width="14.4" height="14.4" rx="1.5" fill="#f4fafc" stroke="#1e7f9c" stroke-width="1.3"/><circle cx="7" cy="7" r="4" fill="#3fa8c8" stroke="#1b5e7a" stroke-width="1.2"/><path d="M10,10 L14,14" stroke="#1b5e7a" stroke-width="2"/></g>
<g transform="translate(635.00,21.50)"><circle cx="8" cy="8" r="6.3" fill="#5cc8d8" stroke="#cc1a1a" stroke-width="1.8"/><path d="M3.5,12.5 L12.5,3.5" stroke="#cc1a1a" stroke-width="1.8"/><path d="M10,2 L14,0.5" stroke="#e0b020" stroke-width="1.5"/></g>
<g transform="translate(679.00,21.50)"><path d="M1.5,5.5 L10.5,5.5 M5.5,1.5 L14.5,1.5 M1.5,5.5 L5.5,1.5 M10.5,5.5 L10.5,14.5 M14.5,1.5 L14.5,10.5 M10.5,5.5 L14.5,1.5 M10.5,14.5 L1.5,14.5 M14.5,10.5 L5.5,10.5 M10.5,14.5 L14.5,10.5 M1.5,14.5 L1.5,5.5 M5.5,10.5 L5.5,1.5 M1.5,14.5 L5.5,10.5 " stroke="#1e7f9c" stroke-width="1.1" fill="none"/></g>
<g transform="translate(711.00,21.50)"><path d="M1.5,5.5 L10.5,5.5 L14.5,1.5 L5.5,1.5 Z" fill="#2e9cbc"/><path d="M10.5,5.5 L14.5,1.5 L14.5,10.5 L10.5,14.5 Z" fill="#1f86a8"/><path d="M1.5,5.5 L10.5,5.5 L10.5,14.5 L1.5,14.5 Z" fill="#3ab4d2"/><path d="M1.5,5.5 L10.5,5.5 M5.5,1.5 L14.5,1.5 M1.5,5.5 L5.5,1.5 M10.5,5.5 L10.5,14.5 M14.5,1.5 L14.5,10.5 M10.5,5.5 L14.5,1.5 M10.5,14.5 L1.5,14.5 M14.5,10.5 L5.5,10.5 M10.5,14.5 L14.5,10.5 M1.5,14.5 L1.5,5.5 M5.5,10.5 L5.5,1.5 M1.5,14.5 L5.5,10.5 " stroke="#1e7f9c" stroke-width="1.1" fill="none"/></g>
<g transform="translate(734.00,21.50)"><path d="M1.5,5.5 L10.5,5.5 L14.5,1.5 L5.5,1.5 Z" fill="#3aaed0" opacity="0.95"/><path d="M1.5,5.5 L10.5,5.5 M5.5,1.5 L14.5,1.5 M1.5,5.5 L5.5,1.5 M10.5,5.5 L10.5,14.5 M14.5,1.5 L14.5,10.5 M10.5,5.5 L14.5,1.5 M10.5,14.5 L1.5,14.5 M14.5,10.5 L5.5,10.5 M10.5,14.5 L14.5,10.5 M1.5,14.5 L1.5,5.5 M5.5,10.5 L5.5,1.5 M1.5,14.5 L5.5,10.5 " stroke="#1e7f9c" stroke-width="1.1" fill="none"/></g>
<g transform="translate(758.50,21.50)"><path d="M10.5,5.5 L14.5,1.5 L14.5,10.5 L10.5,14.5 Z" fill="#3aaed0" opacity="0.95"/><path d="M1.5,5.5 L10.5,5.5 M5.5,1.5 L14.5,1.5 M1.5,5.5 L5.5,1.5 M10.5,5.5 L10.5,14.5 M14.5,1.5 L14.5,10.5 M10.5,5.5 L14.5,1.5 M10.5,14.5 L1.5,14.5 M14.5,10.5 L5.5,10.5 M10.5,14.5 L14.5,10.5 M1.5,14.5 L1.5,5.5 M5.5,10.5 L5.5,1.5 M1.5,14.5 L5.5,10.5 " stroke="#1e7f9c" stroke-width="1.1" fill="none"/></g>
<g transform="translate(790.00,21.50)"><path d="M5.5,1.5 L14.5,1.5 L14.5,10.5 L5.5,10.5 Z" fill="#3aaed0" opacity="0.95"/><path d="M1.5,5.5 L10.5,5.5 M5.5,1.5 L14.5,1.5 M1.5,5.5 L5.5,1.5 M10.5,5.5 L10.5,14.5 M14.5,1.5 L14.5,10.5 M10.5,5.5 L14.5,1.5 M10.5,14.5 L1.5,14.5 M14.5,10.5 L5.5,10.5 M10.5,14.5 L14.5,10.5 M1.5,14.5 L1.5,5.5 M5.5,10.5 L5.5,1.5 M1.5,14.5 L5.5,10.5 " stroke="#1e7f9c" stroke-width="1.1" fill="none"/></g>
<g transform="translate(814.00,21.50)"><path d="M1.5,14.5 L10.5,14.5 L14.5,10.5 L5.5,10.5 Z" fill="#3aaed0" opacity="0.95"/><path d="M1.5,5.5 L10.5,5.5 M5.5,1.5 L14.5,1.5 M1.5,5.5 L5.5,1.5 M10.5,5.5 L10.5,14.5 M14.5,1.5 L14.5,10.5 M10.5,5.5 L14.5,1.5 M10.5,14.5 L1.5,14.5 M14.5,10.5 L5.5,10.5 M10.5,14.5 L14.5,10.5 M1.5,14.5 L1.5,5.5 M5.5,10.5 L5.5,1.5 M1.5,14.5 L5.5,10.5 " stroke="#1e7f9c" stroke-width="1.1" fill="none"/></g>
<g transform="translate(838.00,21.50)"><path d="M1.5,5.5 L5.5,1.5 L5.5,10.5 L1.5,14.5 Z" fill="#3aaed0" opacity="0.95"/><path d="M1.5,5.5 L10.5,5.5 M5.5,1.5 L14.5,1.5 M1.5,5.5 L5.5,1.5 M10.5,5.5 L10.5,14.5 M14.5,1.5 L14.5,10.5 M10.5,5.5 L14.5,1.5 M10.5,14.5 L1.5,14.5 M14.5,10.5 L5.5,10.5 M10.5,14.5 L14.5,10.5 M1.5,14.5 L1.5,5.5 M5.5,10.5 L5.5,1.5 M1.5,14.5 L5.5,10.5 " stroke="#1e7f9c" stroke-width="1.1" fill="none"/></g>
<g transform="translate(869.00,21.50)"><path d="M2,4 L5,1 L15,11 L12,14 Z" fill="#2f8fb0" stroke="#1a4a60" stroke-width="1"/><path d="M5,1 L7,1.5 L15.5,10 L15,11" fill="#4ab0d0" stroke="#1a4a60" stroke-width="0.6"/></g>
<path d="M150.5,22 V37" stroke="#d8d6d2" stroke-width="1"/><path d="M151.5,22 V37" stroke="#fbfbfa" stroke-width="1"/>
<path d="M229.5,22 V37" stroke="#d8d6d2" stroke-width="1"/><path d="M230.5,22 V37" stroke="#fbfbfa" stroke-width="1"/>
<path d="M312.5,22 V37" stroke="#d8d6d2" stroke-width="1"/><path d="M313.5,22 V37" stroke="#fbfbfa" stroke-width="1"/>
<path d="M343.5,22 V37" stroke="#d8d6d2" stroke-width="1"/><path d="M344.5,22 V37" stroke="#fbfbfa" stroke-width="1"/>
<path d="M671.5,22 V37" stroke="#d8d6d2" stroke-width="1"/><path d="M672.5,22 V37" stroke="#fbfbfa" stroke-width="1"/>
<path d="M702.5,22 V37" stroke="#d8d6d2" stroke-width="1"/><path d="M703.5,22 V37" stroke="#fbfbfa" stroke-width="1"/>
<path d="M782.5,22 V37" stroke="#d8d6d2" stroke-width="1"/><path d="M783.5,22 V37" stroke="#fbfbfa" stroke-width="1"/>
<path d="M861.5,22 V37" stroke="#d8d6d2" stroke-width="1"/><path d="M862.5,22 V37" stroke="#fbfbfa" stroke-width="1"/>
<rect x="45.5" y="27.0" width="3" height="1" fill="#c4c2be"/><rect x="45.5" y="29.3" width="3" height="1" fill="#c4c2be"/><rect x="45.5" y="31.6" width="3" height="1" fill="#c4c2be"/>
<rect x="496.5" y="27.0" width="3" height="1" fill="#c4c2be"/><rect x="496.5" y="29.3" width="3" height="1" fill="#c4c2be"/><rect x="496.5" y="31.6" width="3" height="1" fill="#c4c2be"/>
<rect x="601.9" y="27.0" width="3" height="1" fill="#c4c2be"/><rect x="601.9" y="29.3" width="3" height="1" fill="#c4c2be"/><rect x="601.9" y="31.6" width="3" height="1" fill="#c4c2be"/>
<path d="M260.5,28.0 H267.5 L264,32.0 Z" fill="#4a4a4a"/>
<path d="M297.5,28.0 H304.5 L301,32.0 Z" fill="#c0c0c0"/>
<path d="M658.0,28.0 H665.0 L661.5,32.0 Z" fill="#5a5a5a"/>
<rect x="347.5" y="21.5" width="120.5" height="15" rx="3" fill="url(#gcombo)" stroke="#b9b6b1"/>
<path d="M352,25 L354.5,23 H362 V31 L359.5,33 H352 Z" fill="#0a14e0" stroke="#050830" stroke-width="0.8"/><path d="M359.5,25 L362,23 V31 L359.5,33 Z" fill="#08108a"/><path d="M352,25 L354.5,23 H362 L359.5,25 Z" fill="#3040ff"/>
<text x="364.5" y="33" font-size="10.2" fill="#3c3c3c">Part</text>
<path d="M460,27.5 L462,25 L464,27.5 Z M460,31.5 L462,34 L464,31.5 Z" fill="#555"/>
<g transform="translate(54.00,47.50)"><ellipse cx="10" cy="14.5" rx="6" ry="1.5" fill="#303030" opacity="0.7"/><path d="M1,5 L4,2 H14 V12 L11,15 H1 Z" fill="#e8a800" stroke="#a06a00" stroke-width="0.7"/><path d="M1,5 L4,2 H14 L11,5 Z" fill="#ffe060"/><path d="M11,5 L14,2 V12 L11,15 Z" fill="#c88400"/><rect x="1" y="5" width="10" height="10" fill="#ffc818"/></g>
<g transform="translate(78.00,47.50)"><ellipse cx="10" cy="14.5" rx="6" ry="1.5" fill="#303030" opacity="0.7"/><path d="M2,3.5 V13 A5.5,2 0 0 0 13,13 V3.5 Z" fill="#ffc010" stroke="#a06a00" stroke-width="0.7"/><ellipse cx="7.5" cy="3.5" rx="5.5" ry="2" fill="#ffe68a" stroke="#a06a00" stroke-width="0.7"/></g>
<g transform="translate(101.50,47.50)"><ellipse cx="10" cy="13.5" rx="6.5" ry="2" fill="#303030" opacity="0.7"/><circle cx="7.5" cy="8" r="6.2" fill="#ffbe10" stroke="#b07800" stroke-width="0.6"/><circle cx="6" cy="6" r="3" fill="#ffe070" opacity="0.6"/></g>
<g transform="translate(126.00,47.50)"><ellipse cx="10" cy="14" rx="6.5" ry="1.8" fill="#303030" opacity="0.7"/><path d="M7.5,1 L13,13 A5.5,2 0 0 1 2,13 Z" fill="#ffc010" stroke="#a06a00" stroke-width="0.6"/><path d="M7.5,1 L6,13 L3,13 Z" fill="#ffe07a"/></g>
<g transform="translate(150.00,47.50)"><ellipse cx="10" cy="12.5" rx="7" ry="2.5" fill="#303030" opacity="0.7"/><ellipse cx="7.5" cy="8" rx="7" ry="5" fill="#ffbe10" stroke="#a06a00" stroke-width="0.7"/><ellipse cx="7.5" cy="7.5" rx="3" ry="1.8" fill="#f2f1f0" stroke="#a06a00" stroke-width="0.7"/></g>
<g transform="translate(174.00,47.50)"><path d="M3.5,0.5 L6,6 H1 Z" fill="#f0c020" stroke="#a07000" stroke-width="0.5"/><rect x="6" y="5" width="7" height="8" fill="#ffc818" stroke="#a06a00" stroke-width="0.5"/><circle cx="4" cy="11" r="3.3" fill="#d9a418" stroke="#604010" stroke-width="0.8"/><circle cx="12" cy="12" r="3.5" fill="none" stroke="#404090" stroke-width="1"/><path d="M9,3 H15" stroke="#404040" stroke-width="1"/></g>
<g transform="translate(198.40,47.50)"><rect x="1" y="8.5" width="7" height="6.5" fill="#ffc010" stroke="#a06a00" stroke-width="0.5"/><rect x="11" y="6" width="4.5" height="5" fill="#f4f4f4" stroke="#555" stroke-width="0.8"/><circle cx="2" cy="5" r="1.3" fill="#111"/><path d="M3,4.5 L7,2" stroke="#d02020" stroke-width="1"/><path d="M10,1 H15.5" stroke="#111" stroke-width="1.2"/><path d="M13,3 V5 M13,12 V14 L10,14" stroke="#d02020" stroke-width="1"/></g>
<g transform="translate(231.00,47.50)"><ellipse cx="10" cy="14" rx="6" ry="1.5" fill="#303030" opacity="0.7"/><path d="M1,10 L4,8 H14 L11,10 Z" fill="#7aa8e8" stroke="#1a3a90" stroke-width="0.6"/><path d="M1,10 H11 V14 H1 Z" fill="#3060c0" stroke="#1a3a90" stroke-width="0.6"/><path d="M11,10 L14,8 V12 L11,14 Z" fill="#204a9a"/><path d="M8,1 L12,5 H9.5 V9 H6.5 V5 H4 Z" fill="#2a5ac0" stroke="#102a70" stroke-width="0.6"/></g>
<g transform="translate(255.00,47.50)"><path d="M8,1.5 A6.5,6.5 0 1 0 14.5,8" fill="none" stroke="#2a5ab8" stroke-width="3"/><path d="M8,1.5 A6.5,6.5 0 1 0 14.5,8" fill="none" stroke="#123a90" stroke-width="0.6"/><path d="M8,5 A3,3 0 1 0 11,8 L8,8 Z" fill="#8ab0e8" stroke="#123a90" stroke-width="0.6"/><path d="M11,1 L15,4 L11,6" fill="none" stroke="#111" stroke-width="1"/></g>
<g transform="translate(278.60,47.50)"><path d="M1,3 L6.5,1.5 V14.5 L1,13 Z" fill="#7aa0e0" stroke="#1a3a90" stroke-width="0.6"/><path d="M15,3 L9.5,1.5 V14.5 L15,13 Z" fill="#2a58b8" stroke="#1a3a90" stroke-width="0.6"/><path d="M8,0 V16" stroke="#e01818" stroke-width="1.2" stroke-dasharray="2,1.2"/></g>
<g transform="translate(303.00,47.50)"><ellipse cx="10" cy="13.5" rx="5" ry="1.6" fill="#303030" opacity="0.7"/><path d="M1,4 C1,1.5 3,1 5,1 H15 L13,4 H5 C4,4 4,5 4,6 V14 H1 Z" fill="#5a88d8" stroke="#1a3a90" stroke-width="0.6"/><path d="M4,6 C4,5 4.5,4 6,4 H13 V9 H8 C6,9 6,10 6,11 V14 H4 Z" fill="#2e5cb8" stroke="#1a3a90" stroke-width="0.5"/><path d="M7,11 L15,11 L15,14 L7,14 Z" fill="#3a3a3a"/></g>
<g transform="translate(327.50,47.50)"><ellipse cx="10" cy="13.5" rx="5" ry="1.6" fill="#303030" opacity="0.7"/><path d="M1,4 C1,1.5 3,1 5,1 H15 L13,4 H5 C4,4 4,5 4,6 V14 H1 Z" fill="#5a88d8" stroke="#1a3a90" stroke-width="0.6"/><path d="M4,6 C4,5 4.5,4 6,4 H13 V9 H8 C6,9 6,10 6,11 V14 H4 Z" fill="#2e5cb8" stroke="#1a3a90" stroke-width="0.5"/><path d="M7,11 L15,11 L15,14 L7,14 Z" fill="#3a3a3a"/></g>
<g transform="translate(351.00,47.50)"><path d="M2,3 L13,1 V13 L2,15 Z" fill="#6e98e0" stroke="#1a3a90" stroke-width="0.5"/><path d="M2,3 V15" stroke="#e01818" stroke-width="2"/><path d="M13,1 V13" stroke="#e01818" stroke-width="2"/></g>
<g transform="translate(375.00,47.50)"><path d="M3,5 L11,1 L14,2 L14,10 L5,14 L3,13 Z" fill="#2e5cc0" stroke="#1a3a90" stroke-width="0.6"/><path d="M3,5 L11,1 L13,9 L5,14 Z" fill="#5a88d8"/><path d="M3,9 V13 L6,12 V9 Z" fill="#fff" stroke="#e01818" stroke-width="0.9"/><path d="M11,1 L14,2 V10" stroke="#e01818" stroke-width="1" fill="none"/></g>
<g transform="translate(398.75,47.50)"><path d="M2,9 C8,9 11,6 12,1 L15,3 C14,10 10,14 2,14 Z" fill="#2e5cc0" stroke="#1a3a90" stroke-width="0.6"/><path d="M2,9 L2,14" stroke="#e01818" stroke-width="1.5"/><path d="M12,1 L16,0 M13,4 L16,1" stroke="#e01818" stroke-width="1.2"/><circle cx="4" cy="12" r="1.5" fill="#fff" stroke="#e01818" stroke-width="0.8"/><path d="M0,12 H4" stroke="#e01818" stroke-width="1.4"/></g>
<g transform="translate(422.00,47.50)"><path d="M1,11 L6,9 H15 L10,11 Z" fill="#b4b4b4" stroke="#8a8a8a" stroke-width="0.5"/><path d="M1,14 L6,12 H15 L10,14 Z" fill="#a6a6a6" stroke="#8a8a8a" stroke-width="0.5"/><path d="M8,1 L12,5 H9.5 V8 H6.5 V5 H4 Z" fill="#8e8e8e"/></g>
<g transform="translate(446.60,47.50)"><path d="M1,8 L5,5.5 H15 L11,8 Z" fill="#dcdcdc" stroke="#9a9a9a" stroke-width="0.5"/><path d="M1,8 H11 V12 H1 Z" fill="#b8b8b8" stroke="#9a9a9a" stroke-width="0.5"/><path d="M11,8 L15,5.5 V9.5 L11,12 Z" fill="#a0a0a0"/></g>
<g transform="translate(479.60,47.50)"><ellipse cx="8" cy="14" rx="6" ry="1.6" fill="#303030" opacity="0.7"/><circle cx="10.5" cy="6" r="5" fill="#8aaef0" stroke="#3050a0" stroke-width="0.5"/><circle cx="6" cy="9.5" r="5.3" fill="#1840a8" stroke="#0a2060" stroke-width="0.5"/><circle cx="4.5" cy="8" r="2" fill="#5080d0" opacity="0.6"/></g>
<g transform="translate(503.00,47.50)"><ellipse cx="8" cy="14" rx="6" ry="1.6" fill="#303030" opacity="0.7"/><circle cx="6.5" cy="9" r="5.5" fill="#8c8c8c" stroke="#5a5a5a" stroke-width="0.5"/><circle cx="10.5" cy="5.5" r="4.8" fill="#ffffff" stroke="#555" stroke-width="0.6"/></g>
<g transform="translate(527.40,47.50)"><ellipse cx="8" cy="14" rx="6" ry="1.6" fill="#303030" opacity="0.7"/><circle cx="10.5" cy="5.5" r="4.8" fill="#8a8a8a"/><circle cx="6" cy="9.5" r="5.3" fill="#8e8e8e"/><circle cx="5" cy="8" r="2" fill="#b0b0b0" opacity="0.6"/></g>
<g transform="translate(551.80,47.50)"><circle cx="6" cy="10" r="5.2" fill="#fff" stroke="#666" stroke-width="0.7"/><circle cx="10" cy="6" r="5.2" fill="none" stroke="#666" stroke-width="0.7"/><path d="M5.5,7 A5,5 0 0 1 10.5,10.5 A5,5 0 0 1 5.5,7" fill="#8a8a8a"/><path d="M7,11 L9.5,14" stroke="#777" stroke-width="0.8"/></g>
<g transform="translate(576.00,47.50)"><ellipse cx="8" cy="14" rx="6" ry="1.6" fill="#303030" opacity="0.7"/><path d="M8,7 L3,14 H13 Z" fill="#909090" stroke="#6a6a6a" stroke-width="0.5"/><circle cx="8.5" cy="4.5" r="3.3" fill="#e6e6e6" stroke="#777" stroke-width="0.6"/><path d="M10.5,6.5 L15,10" stroke="#777" stroke-width="1"/></g>
<g transform="translate(599.70,47.50)"><path d="M2,4 L6,1 H14 V11 L10,14 H2 Z" fill="#c4c4c4" stroke="#9a9a9a" stroke-width="0.6"/><rect x="2" y="4" width="8" height="10" fill="#b0b0b0" stroke="#9a9a9a" stroke-width="0.5"/><rect x="4" y="6" width="4" height="6" fill="#d4d4d4"/></g>
<g transform="translate(624.00,47.50)"><path d="M2,4 L6,2 H14 L10,4 Z" fill="#c8c8c8" stroke="#8a8a8a" stroke-width="0.5"/><path d="M2,4 H10 V7 H2 Z M2,9 H10 V12 H2 Z" fill="#a6a6a6" stroke="#8a8a8a" stroke-width="0.5"/><path d="M10,4 L14,2 V5 L10,7 Z M10,9 L14,7 V10 L10,12 Z" fill="#8e8e8e"/><path d="M0,8 L4,6 H14 L10,8 Z" fill="#bbbbbb" opacity="0.7"/></g>
<g transform="translate(656.30,47.50)"><path d="M2,4 C3,1 11,0 13,3 L14.5,9 C15,12 12,14 9,14 L4,13.5 C1,13 0.5,10 1,8 Z" fill="url(#gtape)" stroke="#777" stroke-width="0.5"/><circle cx="6.2" cy="8.8" r="4.3" fill="#0c0c0c"/><path d="M2.2,7.6 A4.3,4.3 0 0 1 10.3,7.2 L6.2,8.3 Z" fill="#f2e614"/><rect x="11.2" y="7" width="1.8" height="3" fill="#e8e040"/><path d="M9.5,12 L15.5,15" stroke="#f0e8a0" stroke-width="1.8"/><path d="M9.5,12.9 L15.5,15.9" stroke="#999" stroke-width="0.5"/><path d="M10,11 L15.5,14.5" stroke="#e8e090" stroke-width="2"/><path d="M10,11 L15.5,14.5" stroke="#888" stroke-width="0.5"/></g>
<g transform="translate(679.80,47.50)"><path d="M2,4 C3,1 11,0 13,3 L14.5,9 C15,12 12,14 9,14 L4,13.5 C1,13 0.5,10 1,8 Z" fill="url(#gtape)" stroke="#777" stroke-width="0.5"/><circle cx="6.2" cy="8.8" r="4.3" fill="#0c0c0c"/><path d="M2.2,7.6 A4.3,4.3 0 0 1 10.3,7.2 L6.2,8.3 Z" fill="#f2e614"/><rect x="11.2" y="7" width="1.8" height="3" fill="#e8e040"/><path d="M9.5,12 L15.5,15" stroke="#f0e8a0" stroke-width="1.8"/><path d="M9.5,12.9 L15.5,15.9" stroke="#999" stroke-width="0.5"/><path d="M4,2 C7,0 11,0 13,2" fill="none" stroke="#2a4ab0" stroke-width="1.4"/><path d="M1,1.5 L6.5,15 L15.5,3" fill="none" stroke="#d81818" stroke-width="1.7"/></g>
<g transform="translate(711.50,47.50)"><path d="M2,4 C3,1 11,0 13,3 L14.5,9 C15,12 12,14 9,14 L4,13.5 C1,13 0.5,10 1,8 Z" fill="url(#gtape)" stroke="#777" stroke-width="0.5"/><circle cx="6.2" cy="8.8" r="4.3" fill="#0c0c0c"/><path d="M2.2,7.6 A4.3,4.3 0 0 1 10.3,7.2 L6.2,8.3 Z" fill="#f2e614"/><rect x="11.2" y="7" width="1.8" height="3" fill="#e8e040"/><path d="M9.5,12 L15.5,15" stroke="#f0e8a0" stroke-width="1.8"/><path d="M9.5,12.9 L15.5,15.9" stroke="#999" stroke-width="0.5"/><path d="M2.5,14 L13.5,3" stroke="#8a7a30" stroke-width="3.8"/><path d="M2.5,14 L13.5,3" stroke="#f0e080" stroke-width="2.6"/><circle cx="2.2" cy="14.3" r="1.6" fill="#d05050"/><path d="M13,3.5 L15.5,1" stroke="#222" stroke-width="1.6"/></g>
<g transform="translate(735.75,47.50)"><path d="M2,4 C3,1 11,0 13,3 L14.5,9 C15,12 12,14 9,14 L4,13.5 C1,13 0.5,10 1,8 Z" fill="url(#gtape)" stroke="#777" stroke-width="0.5"/><circle cx="6.2" cy="8.8" r="4.3" fill="#0c0c0c"/><path d="M2.2,7.6 A4.3,4.3 0 0 1 10.3,7.2 L6.2,8.3 Z" fill="#f2e614"/><rect x="11.2" y="7" width="1.8" height="3" fill="#e8e040"/><path d="M9.5,12 L15.5,15" stroke="#f0e8a0" stroke-width="1.8"/><path d="M9.5,12.9 L15.5,15.9" stroke="#999" stroke-width="0.5"/><path d="M1,15 V2.5 H15 V15" fill="none" stroke="#1a9a1a" stroke-width="1.7"/><path d="M1.5,8 L8,2 L15,9 L10,15.5" fill="none" stroke="#d82828" stroke-width="1.7"/></g>
<g transform="translate(760.00,47.50)"><path d="M2,4 C3,1 11,0 13,3 L14.5,9 C15,12 12,14 9,14 L4,13.5 C1,13 0.5,10 1,8 Z" fill="url(#gtape)" stroke="#777" stroke-width="0.5"/><circle cx="6.2" cy="8.8" r="4.3" fill="#0c0c0c"/><path d="M2.2,7.6 A4.3,4.3 0 0 1 10.3,7.2 L6.2,8.3 Z" fill="#f2e614"/><rect x="11.2" y="7" width="1.8" height="3" fill="#e8e040"/><path d="M9.5,12 L15.5,15" stroke="#f0e8a0" stroke-width="1.8"/><path d="M9.5,12.9 L15.5,15.9" stroke="#999" stroke-width="0.5"/><path d="M1,7 L7.5,1 L15,9.5 L10,15.5" fill="none" stroke="#d82828" stroke-width="1.8"/></g>
<g transform="translate(784.00,47.50)"><path d="M2,4 C3,1 11,0 13,3 L14.5,9 C15,12 12,14 9,14 L4,13.5 C1,13 0.5,10 1,8 Z" fill="url(#gtape)" stroke="#777" stroke-width="0.5"/><circle cx="6.2" cy="8.8" r="4.3" fill="#0c0c0c"/><path d="M2.2,7.6 A4.3,4.3 0 0 1 10.3,7.2 L6.2,8.3 Z" fill="#f2e614"/><rect x="11.2" y="7" width="1.8" height="3" fill="#e8e040"/><path d="M9.5,12 L15.5,15" stroke="#f0e8a0" stroke-width="1.8"/><path d="M9.5,12.9 L15.5,15.9" stroke="#999" stroke-width="0.5"/><path d="M1,15 V2.5 H15 V15" fill="none" stroke="#1a9a1a" stroke-width="1.8"/></g>
<rect x="45.5" y="53.0" width="3" height="1" fill="#c4c2be"/><rect x="45.5" y="55.3" width="3" height="1" fill="#c4c2be"/><rect x="45.5" y="57.6" width="3" height="1" fill="#c4c2be"/>
<rect x="222.5" y="53.0" width="3" height="1" fill="#c4c2be"/><rect x="222.5" y="55.3" width="3" height="1" fill="#c4c2be"/><rect x="222.5" y="57.6" width="3" height="1" fill="#c4c2be"/>
<rect x="470.5" y="53.0" width="3" height="1" fill="#c4c2be"/><rect x="470.5" y="55.3" width="3" height="1" fill="#c4c2be"/><rect x="470.5" y="57.6" width="3" height="1" fill="#c4c2be"/>
<rect x="647.2" y="53.0" width="3" height="1" fill="#c4c2be"/><rect x="647.2" y="55.3" width="3" height="1" fill="#c4c2be"/><rect x="647.2" y="57.6" width="3" height="1" fill="#c4c2be"/>
<path d="M704.5,49 V63" stroke="#d8d6d2" stroke-width="1"/><path d="M705.5,49 V63" stroke="#fbfbfa" stroke-width="1"/>
<defs><linearGradient id="tileGloss" x1="0" y1="0" x2="0" y2="1"><stop offset="0" stop-color="#fff" stop-opacity="0.18"/><stop offset="1" stop-color="#fff" stop-opacity="0"/></linearGradient><radialGradient id="lub" cx="0.5" cy="0.5" r="0.75"><stop offset="0" stop-color="#8a9ac8"/><stop offset="0.6" stop-color="#6a7cb0"/><stop offset="1" stop-color="#4e5e98"/></radialGradient><linearGradient id="lfile" x1="0" y1="0" x2="0" y2="1"><stop offset="0" stop-color="#e4e4e4"/><stop offset="1" stop-color="#a8a8a8"/></linearGradient><radialGradient id="lff" cx="0.55" cy="0.4" r="0.6"><stop offset="0" stop-color="#3a8ad8"/><stop offset="0.6" stop-color="#1a3a88"/><stop offset="1" stop-color="#e85a10"/></radialGradient><linearGradient id="lterm" x1="0" y1="0" x2="0" y2="1"><stop offset="0" stop-color="#e6e6e6"/><stop offset="1" stop-color="#a6a6a6"/></linearGradient><linearGradient id="lfcF" x1="0" y1="0" x2="0" y2="1"><stop offset="0" stop-color="#ff8a40"/><stop offset="0.5" stop-color="#ff4a14"/><stop offset="1" stop-color="#e82a08"/></linearGradient><radialGradient id="lp" cx="0.4" cy="0.35" r="0.7"><stop offset="0" stop-color="#ff4a4a"/><stop offset="1" stop-color="#b00818"/></radialGradient></defs>
<g transform="translate(4,20)"><rect x="0.5" y="0.5" width="34" height="34" rx="4" fill="url(#lub)" stroke="rgba(255,255,255,0.35)" stroke-width="1"/><rect x="1" y="1" width="33" height="16" rx="3" fill="url(#tileGloss)"/><circle cx="17" cy="17.3" r="14" fill="none" stroke="#b0bce0" stroke-width="2" opacity="0.35"/><circle cx="17" cy="17.3" r="11" fill="#c8d0ea" opacity="0.4"/><circle cx="17" cy="17.3" r="9.6" fill="#fff"/><circle cx="17.4" cy="17.3" r="4.6" fill="none" stroke="#1d2848" stroke-width="1.8"/><circle cx="20.9" cy="11.2" r="1.9" fill="#1d2848" stroke="#fff" stroke-width="0.5"/><circle cx="10.2" cy="17.2" r="1.9" fill="#1d2848" stroke="#fff" stroke-width="0.5"/><circle cx="20.9" cy="23.3" r="1.9" fill="#1d2848" stroke="#fff" stroke-width="0.5"/></g>
<g transform="translate(4,59.4)"><rect x="0.5" y="0.5" width="34" height="34" rx="4" fill="#8c4c5c" stroke="#a86878" stroke-width="1"/><rect x="1" y="1" width="33" height="16" rx="3" fill="url(#tileGloss)"/><rect x="3.5" y="2.5" width="27.5" height="28.5" rx="1.5" fill="#d4d4d4" stroke="#9a9a9a" stroke-width="0.5"/><rect x="4" y="3" width="26.5" height="5.5" fill="#ececec"/><rect x="5.5" y="8.5" width="23.5" height="5" fill="#2a2a2a"/><rect x="6" y="10" width="22.5" height="3.5" fill="#f4a050"/><rect x="6" y="11" width="22" height="1" fill="#fce0a0"/><rect x="4.5" y="13.5" width="25.5" height="17" fill="url(#lfile)"/><rect x="13.5" y="20" width="8" height="4.5" rx="1" fill="#f4f4f4" stroke="#555" stroke-width="1"/></g>
<g transform="translate(4,98.8)"><rect x="0.5" y="0.5" width="34" height="34" rx="4" fill="#a87a58" stroke="#c09070" stroke-width="1"/><rect x="1" y="1" width="33" height="16" rx="3" fill="url(#tileGloss)"/><circle cx="18" cy="16.5" r="11.5" fill="#1a62b8"/><circle cx="19" cy="12" r="7" fill="#5ab4ec" opacity="0.8"/><circle cx="20" cy="20" r="6" fill="#0c3a88" opacity="0.7"/><path d="M6,9 C3,18 8,30 18,30.5 C26,31 31,25 30.5,16 C30,20 27,25 22,25.5 C16,26 13,22 16,20 C18,19 21,20 22,21 C20,17 15,17 13,15 C14,12 15,11 17,10 C13,9 11,11 10,13 C9,11 8,9 6,9 Z" fill="#e86a1a"/><path d="M28,9 C31,13 31,20 29,24 C28,21 27,17 25,15 Z" fill="#f8c020"/><path d="M8,22 C10,28 16,31 22,30 C16,29 11,26 8,22 Z" fill="#c84a10"/></g>
<g transform="translate(4,138.2)"><rect x="0.5" y="0.5" width="34" height="34" rx="4" fill="#4e6494" stroke="rgba(255,255,255,0.3)" stroke-width="1"/><rect x="1" y="1" width="33" height="16" rx="3" fill="url(#tileGloss)"/><path d="M11,7 V4.5 C11,1.5 24,1.5 24,4.5 V7" fill="none" stroke="#f08a58" stroke-width="1.8"/><path d="M3.5,6.5 H31.5 V31 H3.5 Z" fill="#f0783e"/><rect x="3.5" y="6.5" width="28" height="6" fill="#f89060"/><path d="M12.5,27 L17.5,13.5 L22.5,27" stroke="#fff" stroke-width="2.6" fill="none"/><path d="M11,23 H24" stroke="#fff" stroke-width="2"/><path d="M10,27 H25" stroke="#fff" stroke-width="1.6"/></g>
<g transform="translate(4,177.6)"><rect x="0.5" y="0.5" width="34" height="34" rx="4" fill="#56698e" stroke="rgba(255,255,255,0.3)" stroke-width="1"/><rect x="1" y="1" width="33" height="16" rx="3" fill="url(#tileGloss)"/><path d="M30.70,17.50 L30.45,20.08 L27.20,21.52 L26.23,23.33 L26.83,26.83 L24.83,28.48 L21.52,27.20 L19.55,27.80 L17.50,30.70 L14.92,30.45 L13.48,27.20 L11.67,26.23 L8.17,26.83 L6.52,24.83 L7.80,21.52 L7.20,19.55 L4.30,17.50 L4.55,14.92 L7.80,13.48 L8.77,11.67 L8.17,8.17 L10.17,6.52 L13.48,7.80 L15.45,7.20 L17.50,4.30 L20.08,4.55 L21.52,7.80 L23.33,8.77 L26.83,8.17 L28.48,10.17 L27.20,13.48 L27.80,15.45Z" fill="#dcdcdc" stroke="#b4b4b4" stroke-width="0.5"/><circle cx="17.5" cy="17.5" r="6.5" fill="#9a9a9a"/><circle cx="17.5" cy="17.5" r="5" fill="#c8c8c8"/><path d="M6.5,29 L24,11.5" stroke="#b01818" stroke-width="5" stroke-linecap="round"/><path d="M6.5,29 L24,11.5" stroke="#e03a3a" stroke-width="3" stroke-linecap="round"/><circle cx="7.5" cy="28" r="1" fill="#700"/><path d="M22,13.5 C20.5,8 25,4 30,5 L26.5,8.5 L27.5,11.5 L30.5,12.5 L34,9 C35,14 30,18 24.5,16 Z" fill="#f0f0f0" stroke="#999" stroke-width="0.6"/></g>
<g transform="translate(4,217)"><rect x="0.5" y="0.5" width="34" height="34" rx="4" fill="#56698e" stroke="rgba(255,255,255,0.3)" stroke-width="1"/><rect x="1" y="1" width="33" height="16" rx="3" fill="url(#tileGloss)"/><circle cx="17.5" cy="17.5" r="12.5" fill="#7eaee0"/><path d="M17.5,5 A12.5,12.5 0 0 1 29.5,14 L17.5,17.5 Z" fill="#5a8ed0" opacity="0.5"/><path d="M29.5,14 A12.5,12.5 0 0 1 19,30 L17.5,17.5 Z" fill="#d6e6f6"/><path d="M8,9 L14,21 L19,30 A12.5,12.5 0 0 1 8,9 Z" fill="#9ac0e8"/><circle cx="17.5" cy="17.5" r="5.6" fill="#4a7ed0" stroke="#f4f8ff" stroke-width="1.4"/></g>
<g transform="translate(4,256.3)"><rect x="0.5" y="0.5" width="34" height="34" rx="4" fill="#3aa0c0" stroke="#5ab8d8" stroke-width="1"/><rect x="1" y="1" width="33" height="16" rx="3" fill="url(#tileGloss)"/><path d="M27,11 C24,6 19,5 15,6 C8,8 6,15 7,20 C8,27 14,31 21,30 C25,29 27,27 28,24 L22,22 C21,24 19,25 17,24.5 C13,24 12,20 12.5,17 C13,13 16,11 19,11.5 C21,12 22,13 22.5,14 Z" fill="#1a6a88"/><path d="M29,10 C26,5 21,4 17,5 C10,7 9,14 10,19 C11,26 16,30 23,29 C27,28 29,26 30,23 L24,21 C23,23 21,24 19,23.5 C15,23 14,19 14.5,16 C15,12 18,10 21,10.5 C23,11 24,12 24.5,13 Z" fill="#30c8f0"/></g>
<g transform="translate(4,295.6)"><rect x="0.5" y="0.5" width="34" height="34" rx="4" fill="url(#lterm)" stroke="#c8c8c8" stroke-width="1"/><rect x="1" y="1" width="33" height="16" rx="3" fill="url(#tileGloss)"/><rect x="4" y="7" width="27" height="21" rx="1.5" fill="#2a2a2a" stroke="#555" stroke-width="0.8"/><path d="M7.5,11 L11,13 L7.5,15" stroke="#fff" stroke-width="1.3" fill="none"/><path d="M12,16 H16" stroke="#fff" stroke-width="1.3"/></g>
<g transform="translate(4,334.4)"><rect x="0.5" y="0.5" width="34" height="34" rx="4" fill="#c04a5a" stroke="#d86a78" stroke-width="1"/><rect x="1" y="1" width="33" height="16" rx="3" fill="url(#tileGloss)"/><path d="M3.5,3 H21 V10 H11 V14 H17 V20 H11 V32 H3.5 Z" fill="url(#lfcF)" stroke="#6a1008" stroke-width="0.6"/><path d="M33.50,22.00 L33.33,23.91 L30.21,24.80 L29.60,26.10 L30.93,29.07 L29.57,30.43 L26.60,29.10 L25.30,29.71 L24.41,32.83 L22.50,33.00 L21.08,30.08 L19.70,29.71 L17.00,31.53 L15.43,30.43 L16.22,27.27 L15.40,26.10 L12.16,25.76 L11.67,23.91 L14.30,22.00 L14.42,20.58 L12.16,18.24 L12.97,16.50 L16.22,16.73 L17.23,15.72 L17.00,12.47 L18.74,11.66 L21.08,13.92 L22.50,13.80 L24.41,11.17 L26.26,11.66 L26.60,14.90 L27.77,15.72 L30.93,14.93 L32.03,16.50 L30.21,19.20 L30.58,20.58Z" fill="#0c2a94" stroke="#061a60" stroke-width="0.5"/><circle cx="22.5" cy="22" r="7.8" fill="#1a44b8"/><circle cx="20" cy="19" r="3.5" fill="#4a84e0" opacity="0.6"/><circle cx="22.5" cy="22" r="3.6" fill="#c04a5a"/></g>
<g transform="translate(4,374.3)"><rect x="0.5" y="0.5" width="34" height="34" rx="4" fill="#c05262" stroke="#d87080" stroke-width="1"/><rect x="1" y="1" width="33" height="16" rx="3" fill="url(#tileGloss)"/><circle cx="17.5" cy="17.3" r="14" fill="url(#lp)"/><ellipse cx="16" cy="9" rx="9" ry="5" fill="#fff" opacity="0.18"/><circle cx="8.5" cy="13.5" r="1.7" fill="#fff"/><circle cx="8.5" cy="22" r="1.7" fill="#fff"/><path d="M11.5,17.5 H16" stroke="#fff" stroke-width="1.8"/><path d="M20,12 V31" stroke="#fff" stroke-width="2.4"/><circle cx="24.5" cy="17.5" r="4.6" fill="none" stroke="#fff" stroke-width="2.4"/></g>
<g transform="translate(4,413.8)"><rect x="0.5" y="0.5" width="34" height="34" rx="4" fill="#68789a" stroke="rgba(255,255,255,0.35)" stroke-width="1"/><rect x="1" y="1" width="33" height="16" rx="3" fill="url(#tileGloss)"/><rect x="1" y="1" width="16.5" height="16.5" rx="2" fill="#4e4660" opacity="0.75"/><path d="M17.5,1 V34 M1,17.5 H34" stroke="#8a98b6" stroke-width="0.8"/><rect x="5" y="6" width="8" height="5" fill="none" stroke="#ddd" stroke-width="0.9"/><rect x="6.5" y="8" width="9" height="6" fill="#4e4660" stroke="#eee" stroke-width="1"/><path d="M8,10 H14 M8,12 H14" stroke="#ccc" stroke-width="0.8"/></g>
<g transform="translate(4,760.5)"><rect x="0.5" y="0.5" width="34" height="34" rx="4" fill="#8a96ac" stroke="rgba(255,255,255,0.3)"/><path d="M9,7 H26 L24,31 H11 Z" fill="#c8ccd0" stroke="#8a8e96" stroke-width="0.8"/><ellipse cx="17.5" cy="7.5" rx="8.5" ry="2.5" fill="#e4e6e8" stroke="#8a8e96" stroke-width="0.8"/><circle cx="14" cy="17" r="3" fill="#fff"/><circle cx="20" cy="19" r="3" fill="#f4f4f4"/><circle cx="16" cy="24" r="3.2" fill="#fff"/><circle cx="21" cy="26" r="2.5" fill="#eee"/></g>
<path d="M0,73.5 L3.5,76.5 L0,79.5 Z" fill="#e8e8e8"/>
<path d="M0,113 L3.5,116 L0,119 Z" fill="#e8e8e8"/>
<path d="M0,270.5 L3.5,273.5 L0,276.5 Z" fill="#e8e8e8"/>
<path d="M0,310 L3.5,313 L0,316 Z" fill="#e8e8e8"/>
<path d="M0,348.5 L3.5,351.5 L0,354.5 Z" fill="#e8e8e8"/>
<path d="M0,388.5 L3.5,391.5 L0,394.5 Z" fill="#e8e8e8"/>
<path d="M43,348.5 L39.5,351.5 L43,354.5 Z" fill="#e8e8e8"/>
<rect x="1041" y="1" width="26" height="13" fill="#2c2c2c"/><path d="M1041,13 H1067" stroke="#2a80d0" stroke-width="1.2"/><path d="M1044,12 h2 M1050,12 h3 M1056,11.5 h2 M1061,12 h3" stroke="#3aa0f0" stroke-width="1"/>
<path d="M1079,3 L1076,7 H1078 V12 H1080 V7 H1082 Z" fill="#e6e2da"/><path d="M1085,14 L1082,10 H1084 V5 H1086 V10 H1088 Z" fill="#e6e2da"/>
<rect x="1096.5" y="1.5" width="12.5" height="12" rx="1.5" fill="#dcd8d0"/><text x="1098" y="11.5" font-size="8.5" fill="#3a3a36">Es</text>
<path d="M1117.5,5 L1122,10 L1119.5,12.5 V2.5 L1122,5 L1117.5,10" fill="none" stroke="#dedad2" stroke-width="1"/>
<rect x="1132" y="4" width="14.5" height="7.5" rx="1" fill="none" stroke="#d6d2ca" stroke-width="1"/><rect x="1146.5" y="6" width="1.5" height="3.5" fill="#d6d2ca"/><rect x="1133.5" y="5.5" width="11.5" height="4.5" fill="#8a877f"/><path d="M1140,5.5 L1138,8 H1140 L1139,10" stroke="#eee" stroke-width="0.8" fill="none"/>
<path d="M1156,6 H1158 L1161,3.5 V12.5 L1158,10 H1156 Z" fill="#e0dcd4"/><path d="M1163,6 Q1164.5,8 1163,10 M1165,4.5 Q1167.5,8 1165,11.5 M1167,3 Q1170,8 1167,13" stroke="#d0ccc4" stroke-width="0.9" fill="none"/>
<circle cx="1269" cy="8" r="4.5" fill="none" stroke="#e6e2da" stroke-width="2.2" stroke-dasharray="2,1.5"/><circle cx="1269" cy="8" r="3.2" fill="none" stroke="#e6e2da" stroke-width="1.4"/><path d="M1269,2.5 V8" stroke="#3e3d39" stroke-width="2.5"/><path d="M1269,3 V7.5" stroke="#e6e2da" stroke-width="1.2"/>
<path d="M51.5,141 H56.5 L54,145.5 Z" fill="#4a4a4a"/>
<path d="M65,153.0 L69,155.5 L65,158.0 Z" fill="#4a4a4a"/>
<path d="M65,165.5 L69,168 L65,170.5 Z" fill="#4a4a4a"/>
<path d="M65,178.5 L69,181 L65,183.5 Z" fill="#4a4a4a"/>
<path d="M62,138 H67 L69.5,140.5 V148 H62 Z" fill="#fafafa" stroke="#777" stroke-width="0.8"/><rect x="63.5" y="145" width="4" height="1.5" fill="#d020d0"/><rect x="63" y="144" width="2" height="2.5" fill="#20c0c0"/>
<circle cx="79.5" cy="156.5" r="4" fill="#a0a0a0"/><circle cx="81.5" cy="154" r="3.5" fill="#fff" stroke="#999" stroke-width="0.6"/>
<path d="M74.5,167.5 L79,165.0 L84.5,167.0 V169.5 L80,172.0 L74.5,170.0 Z" fill="#8a8a8a"/><path d="M74.5,167.5 L79,165.0 L84.5,167.0 L80,169.5 Z" fill="#b0b0b0"/>
<path d="M74.5,180 L79,177.5 L84.5,179.5 V182 L80,184.5 L74.5,182.5 Z" fill="#8a8a8a"/><path d="M74.5,180 L79,177.5 L84.5,179.5 L80,182 Z" fill="#b0b0b0"/>
<rect x="74.5" y="189" width="9.5" height="9" fill="#8c8c8c"/><path d="M76,190 L84,197 M79,189 L84,193.5 M74.5,193 L80,198" stroke="#cfcfcf" stroke-width="1"/>
<path d="M75,203 L77,201 H83 V208 L81,210 H75 Z" fill="#0a1ae0" stroke="#050830" stroke-width="0.6"/><path d="M81,203 L83,201 V208 L81,210 Z" fill="#08108a"/>
<g transform="translate(360.5,71.5) scale(1.0)"><path d="M0.5,1 H6 V3.5 H3 V10.5 H0.5 Z" fill="#f42a0a"/><path d="M3,3.5 H6 V1 H3 Z" fill="#ff6a10"/><path d="M11.10,7.10 L11.02,7.96 L9.66,8.32 L9.36,8.88 L9.81,10.21 L9.14,10.76 L7.92,10.06 L7.32,10.24 L6.70,11.50 L5.84,11.42 L5.48,10.06 L4.92,9.76 L3.59,10.21 L3.04,9.54 L3.74,8.32 L3.56,7.72 L2.30,7.10 L2.38,6.24 L3.74,5.88 L4.04,5.32 L3.59,3.99 L4.26,3.44 L5.48,4.14 L6.08,3.96 L6.70,2.70 L7.56,2.78 L7.92,4.14 L8.48,4.44 L9.81,3.99 L10.36,4.66 L9.66,5.88 L9.84,6.48Z" fill="#0c2a94"/><circle cx="6.7" cy="7.1" r="2.9" fill="#1a48c0"/><circle cx="5.8" cy="6.2" r="1.6" fill="#4a88e8" opacity="0.7"/><circle cx="6.7" cy="7.1" r="1.1" fill="#f6f4ee"/></g>
<g transform="translate(822.5,71.5) scale(1.0)"><path d="M0.5,1 H6 V3.5 H3 V10.5 H0.5 Z" fill="#f42a0a"/><path d="M3,3.5 H6 V1 H3 Z" fill="#ff6a10"/><path d="M11.10,7.10 L11.02,7.96 L9.66,8.32 L9.36,8.88 L9.81,10.21 L9.14,10.76 L7.92,10.06 L7.32,10.24 L6.70,11.50 L5.84,11.42 L5.48,10.06 L4.92,9.76 L3.59,10.21 L3.04,9.54 L3.74,8.32 L3.56,7.72 L2.30,7.10 L2.38,6.24 L3.74,5.88 L4.04,5.32 L3.59,3.99 L4.26,3.44 L5.48,4.14 L6.08,3.96 L6.70,2.70 L7.56,2.78 L7.92,4.14 L8.48,4.44 L9.81,3.99 L10.36,4.66 L9.66,5.88 L9.84,6.48Z" fill="#0c2a94"/><circle cx="6.7" cy="7.1" r="2.9" fill="#1a48c0"/><circle cx="5.8" cy="6.2" r="1.6" fill="#4a88e8" opacity="0.7"/><circle cx="6.7" cy="7.1" r="1.1" fill="#f6f4ee"/></g>
<g transform="translate(360.5,415.5) scale(1.0)"><path d="M0.5,1 H6 V3.5 H3 V10.5 H0.5 Z" fill="#f42a0a"/><path d="M3,3.5 H6 V1 H3 Z" fill="#ff6a10"/><path d="M11.10,7.10 L11.02,7.96 L9.66,8.32 L9.36,8.88 L9.81,10.21 L9.14,10.76 L7.92,10.06 L7.32,10.24 L6.70,11.50 L5.84,11.42 L5.48,10.06 L4.92,9.76 L3.59,10.21 L3.04,9.54 L3.74,8.32 L3.56,7.72 L2.30,7.10 L2.38,6.24 L3.74,5.88 L4.04,5.32 L3.59,3.99 L4.26,3.44 L5.48,4.14 L6.08,3.96 L6.70,2.70 L7.56,2.78 L7.92,4.14 L8.48,4.44 L9.81,3.99 L10.36,4.66 L9.66,5.88 L9.84,6.48Z" fill="#0c2a94"/><circle cx="6.7" cy="7.1" r="2.9" fill="#1a48c0"/><circle cx="5.8" cy="6.2" r="1.6" fill="#4a88e8" opacity="0.7"/><circle cx="6.7" cy="7.1" r="1.1" fill="#f6f4ee"/></g>
<g transform="translate(822.5,415.5) scale(1.0)"><path d="M0.5,1 H6 V3.5 H3 V10.5 H0.5 Z" fill="#f42a0a"/><path d="M3,3.5 H6 V1 H3 Z" fill="#ff6a10"/><path d="M11.10,7.10 L11.02,7.96 L9.66,8.32 L9.36,8.88 L9.81,10.21 L9.14,10.76 L7.92,10.06 L7.32,10.24 L6.70,11.50 L5.84,11.42 L5.48,10.06 L4.92,9.76 L3.59,10.21 L3.04,9.54 L3.74,8.32 L3.56,7.72 L2.30,7.10 L2.38,6.24 L3.74,5.88 L4.04,5.32 L3.59,3.99 L4.26,3.44 L5.48,4.14 L6.08,3.96 L6.70,2.70 L7.56,2.78 L7.92,4.14 L8.48,4.44 L9.81,3.99 L10.36,4.66 L9.66,5.88 L9.84,6.48Z" fill="#0c2a94"/><circle cx="6.7" cy="7.1" r="2.9" fill="#1a48c0"/><circle cx="5.8" cy="6.2" r="1.6" fill="#4a88e8" opacity="0.7"/><circle cx="6.7" cy="7.1" r="1.1" fill="#f6f4ee"/></g>
<g transform="translate(362,763.5) scale(0.85)"><path d="M0.5,1 H6 V3.5 H3 V10.5 H0.5 Z" fill="#f42a0a"/><path d="M3,3.5 H6 V1 H3 Z" fill="#ff6a10"/><path d="M11.10,7.10 L11.02,7.96 L9.66,8.32 L9.36,8.88 L9.81,10.21 L9.14,10.76 L7.92,10.06 L7.32,10.24 L6.70,11.50 L5.84,11.42 L5.48,10.06 L4.92,9.76 L3.59,10.21 L3.04,9.54 L3.74,8.32 L3.56,7.72 L2.30,7.10 L2.38,6.24 L3.74,5.88 L4.04,5.32 L3.59,3.99 L4.26,3.44 L5.48,4.14 L6.08,3.96 L6.70,2.70 L7.56,2.78 L7.92,4.14 L8.48,4.44 L9.81,3.99 L10.36,4.66 L9.66,5.88 L9.84,6.48Z" fill="#0c2a94"/><circle cx="6.7" cy="7.1" r="2.9" fill="#1a48c0"/><circle cx="5.8" cy="6.2" r="1.6" fill="#4a88e8" opacity="0.7"/><circle cx="6.7" cy="7.1" r="1.1" fill="#f6f4ee"/></g>
<g transform="translate(606,763.5) scale(0.85)"><path d="M0.5,1 H6 V3.5 H3 V10.5 H0.5 Z" fill="#f42a0a"/><path d="M3,3.5 H6 V1 H3 Z" fill="#ff6a10"/><path d="M11.10,7.10 L11.02,7.96 L9.66,8.32 L9.36,8.88 L9.81,10.21 L9.14,10.76 L7.92,10.06 L7.32,10.24 L6.70,11.50 L5.84,11.42 L5.48,10.06 L4.92,9.76 L3.59,10.21 L3.04,9.54 L3.74,8.32 L3.56,7.72 L2.30,7.10 L2.38,6.24 L3.74,5.88 L4.04,5.32 L3.59,3.99 L4.26,3.44 L5.48,4.14 L6.08,3.96 L6.70,2.70 L7.56,2.78 L7.92,4.14 L8.48,4.44 L9.81,3.99 L10.36,4.66 L9.66,5.88 L9.84,6.48Z" fill="#0c2a94"/><circle cx="6.7" cy="7.1" r="2.9" fill="#1a48c0"/><circle cx="5.8" cy="6.2" r="1.6" fill="#4a88e8" opacity="0.7"/><circle cx="6.7" cy="7.1" r="1.1" fill="#f6f4ee"/></g>
<g transform="translate(851.5,763.5) scale(0.85)"><path d="M0.5,1 H6 V3.5 H3 V10.5 H0.5 Z" fill="#f42a0a"/><path d="M3,3.5 H6 V1 H3 Z" fill="#ff6a10"/><path d="M11.10,7.10 L11.02,7.96 L9.66,8.32 L9.36,8.88 L9.81,10.21 L9.14,10.76 L7.92,10.06 L7.32,10.24 L6.70,11.50 L5.84,11.42 L5.48,10.06 L4.92,9.76 L3.59,10.21 L3.04,9.54 L3.74,8.32 L3.56,7.72 L2.30,7.10 L2.38,6.24 L3.74,5.88 L4.04,5.32 L3.59,3.99 L4.26,3.44 L5.48,4.14 L6.08,3.96 L6.70,2.70 L7.56,2.78 L7.92,4.14 L8.48,4.44 L9.81,3.99 L10.36,4.66 L9.66,5.88 L9.84,6.48Z" fill="#0c2a94"/><circle cx="6.7" cy="7.1" r="2.9" fill="#1a48c0"/><circle cx="5.8" cy="6.2" r="1.6" fill="#4a88e8" opacity="0.7"/><circle cx="6.7" cy="7.1" r="1.1" fill="#f6f4ee"/></g>
<g transform="translate(1097,763.5) scale(0.85)"><path d="M0.5,1 H6 V3.5 H3 V10.5 H0.5 Z" fill="#f42a0a"/><path d="M3,3.5 H6 V1 H3 Z" fill="#ff6a10"/><path d="M11.10,7.10 L11.02,7.96 L9.66,8.32 L9.36,8.88 L9.81,10.21 L9.14,10.76 L7.92,10.06 L7.32,10.24 L6.70,11.50 L5.84,11.42 L5.48,10.06 L4.92,9.76 L3.59,10.21 L3.04,9.54 L3.74,8.32 L3.56,7.72 L2.30,7.10 L2.38,6.24 L3.74,5.88 L4.04,5.32 L3.59,3.99 L4.26,3.44 L5.48,4.14 L6.08,3.96 L6.70,2.70 L7.56,2.78 L7.92,4.14 L8.48,4.44 L9.81,3.99 L10.36,4.66 L9.66,5.88 L9.84,6.48Z" fill="#0c2a94"/><circle cx="6.7" cy="7.1" r="2.9" fill="#1a48c0"/><circle cx="5.8" cy="6.2" r="1.6" fill="#4a88e8" opacity="0.7"/><circle cx="6.7" cy="7.1" r="1.1" fill="#f6f4ee"/></g>
<path d="M585.5,765.5 L592.5,772.5 M592.5,765.5 L585.5,772.5" stroke="#5a5a5a" stroke-width="2.2"/>
<path d="M830.5,765.5 L837.5,772.5 M837.5,765.5 L830.5,772.5" stroke="#5a5a5a" stroke-width="2.2"/>
<path d="M1075.5,765.5 L1082.5,772.5 M1082.5,765.5 L1075.5,772.5" stroke="#5a5a5a" stroke-width="2.2"/>
<rect x="1259.5" y="759.5" width="8.5" height="18.5" rx="2.5" fill="#f7f7f6" stroke="#dedcd8"/><rect x="1270.5" y="759.5" width="8" height="18.5" rx="2.5" fill="#f7f7f6" stroke="#dedcd8"/><path d="M1265,766 L1262.5,768.8 L1265,771.6 Z" fill="#aaa"/><path d="M1274,766 L1276.5,768.8 L1274,771.6 Z" fill="#666"/>
<path d="M779.0,79.5 H785.0" stroke="#111" stroke-width="1.7"/>
<path d="M793.0,75.5 H798.0 V80.5 H793.0 Z" fill="none" stroke="#111" stroke-width="1.2"/><path d="M792.5,75.3 H798.5" stroke="#111" stroke-width="1.8"/>
<path d="M805.8,74.3 L811.2,79.7 M811.2,74.3 L805.8,79.7" stroke="#111" stroke-width="1.9"/>
<path d="M1240.5,79.5 H1246.5" stroke="#111" stroke-width="1.7"/>
<path d="M1254.5,75.5 H1259.5 V80.5 H1254.5 Z" fill="none" stroke="#111" stroke-width="1.2"/><path d="M1254,75.3 H1260" stroke="#111" stroke-width="1.8"/>
<path d="M1267.3,74.3 L1272.7,79.7 M1272.7,74.3 L1267.3,79.7" stroke="#111" stroke-width="1.9"/>
<path d="M779.0,423.5 H785.0" stroke="#111" stroke-width="1.7"/>
<path d="M793.0,419.5 H798.0 V424.5 H793.0 Z" fill="none" stroke="#111" stroke-width="1.2"/><path d="M792.5,419.3 H798.5" stroke="#111" stroke-width="1.8"/>
<path d="M805.8,418.3 L811.2,423.7 M811.2,418.3 L805.8,423.7" stroke="#111" stroke-width="1.9"/>
<path d="M1240.5,423.5 H1246.5" stroke="#fff" stroke-width="1.7"/>
<path d="M1254.5,419.5 H1259.5 V424.5 H1254.5 Z" fill="none" stroke="#fff" stroke-width="1.2"/><path d="M1254,419.3 H1260" stroke="#fff" stroke-width="1.8"/>
<path d="M1267.3,418.3 L1272.7,423.7 M1272.7,418.3 L1267.3,423.7" stroke="#fff" stroke-width="1.9"/>
<path d="M335,76 h3 v3 h-3 z" fill="none" stroke="#888" stroke-width="0.8"/><path d="M345.5,75.5 L349.5,79.5 M349.5,75.5 L345.5,79.5" stroke="#777" stroke-width="1.2"/>
</svg>
</body></html>
